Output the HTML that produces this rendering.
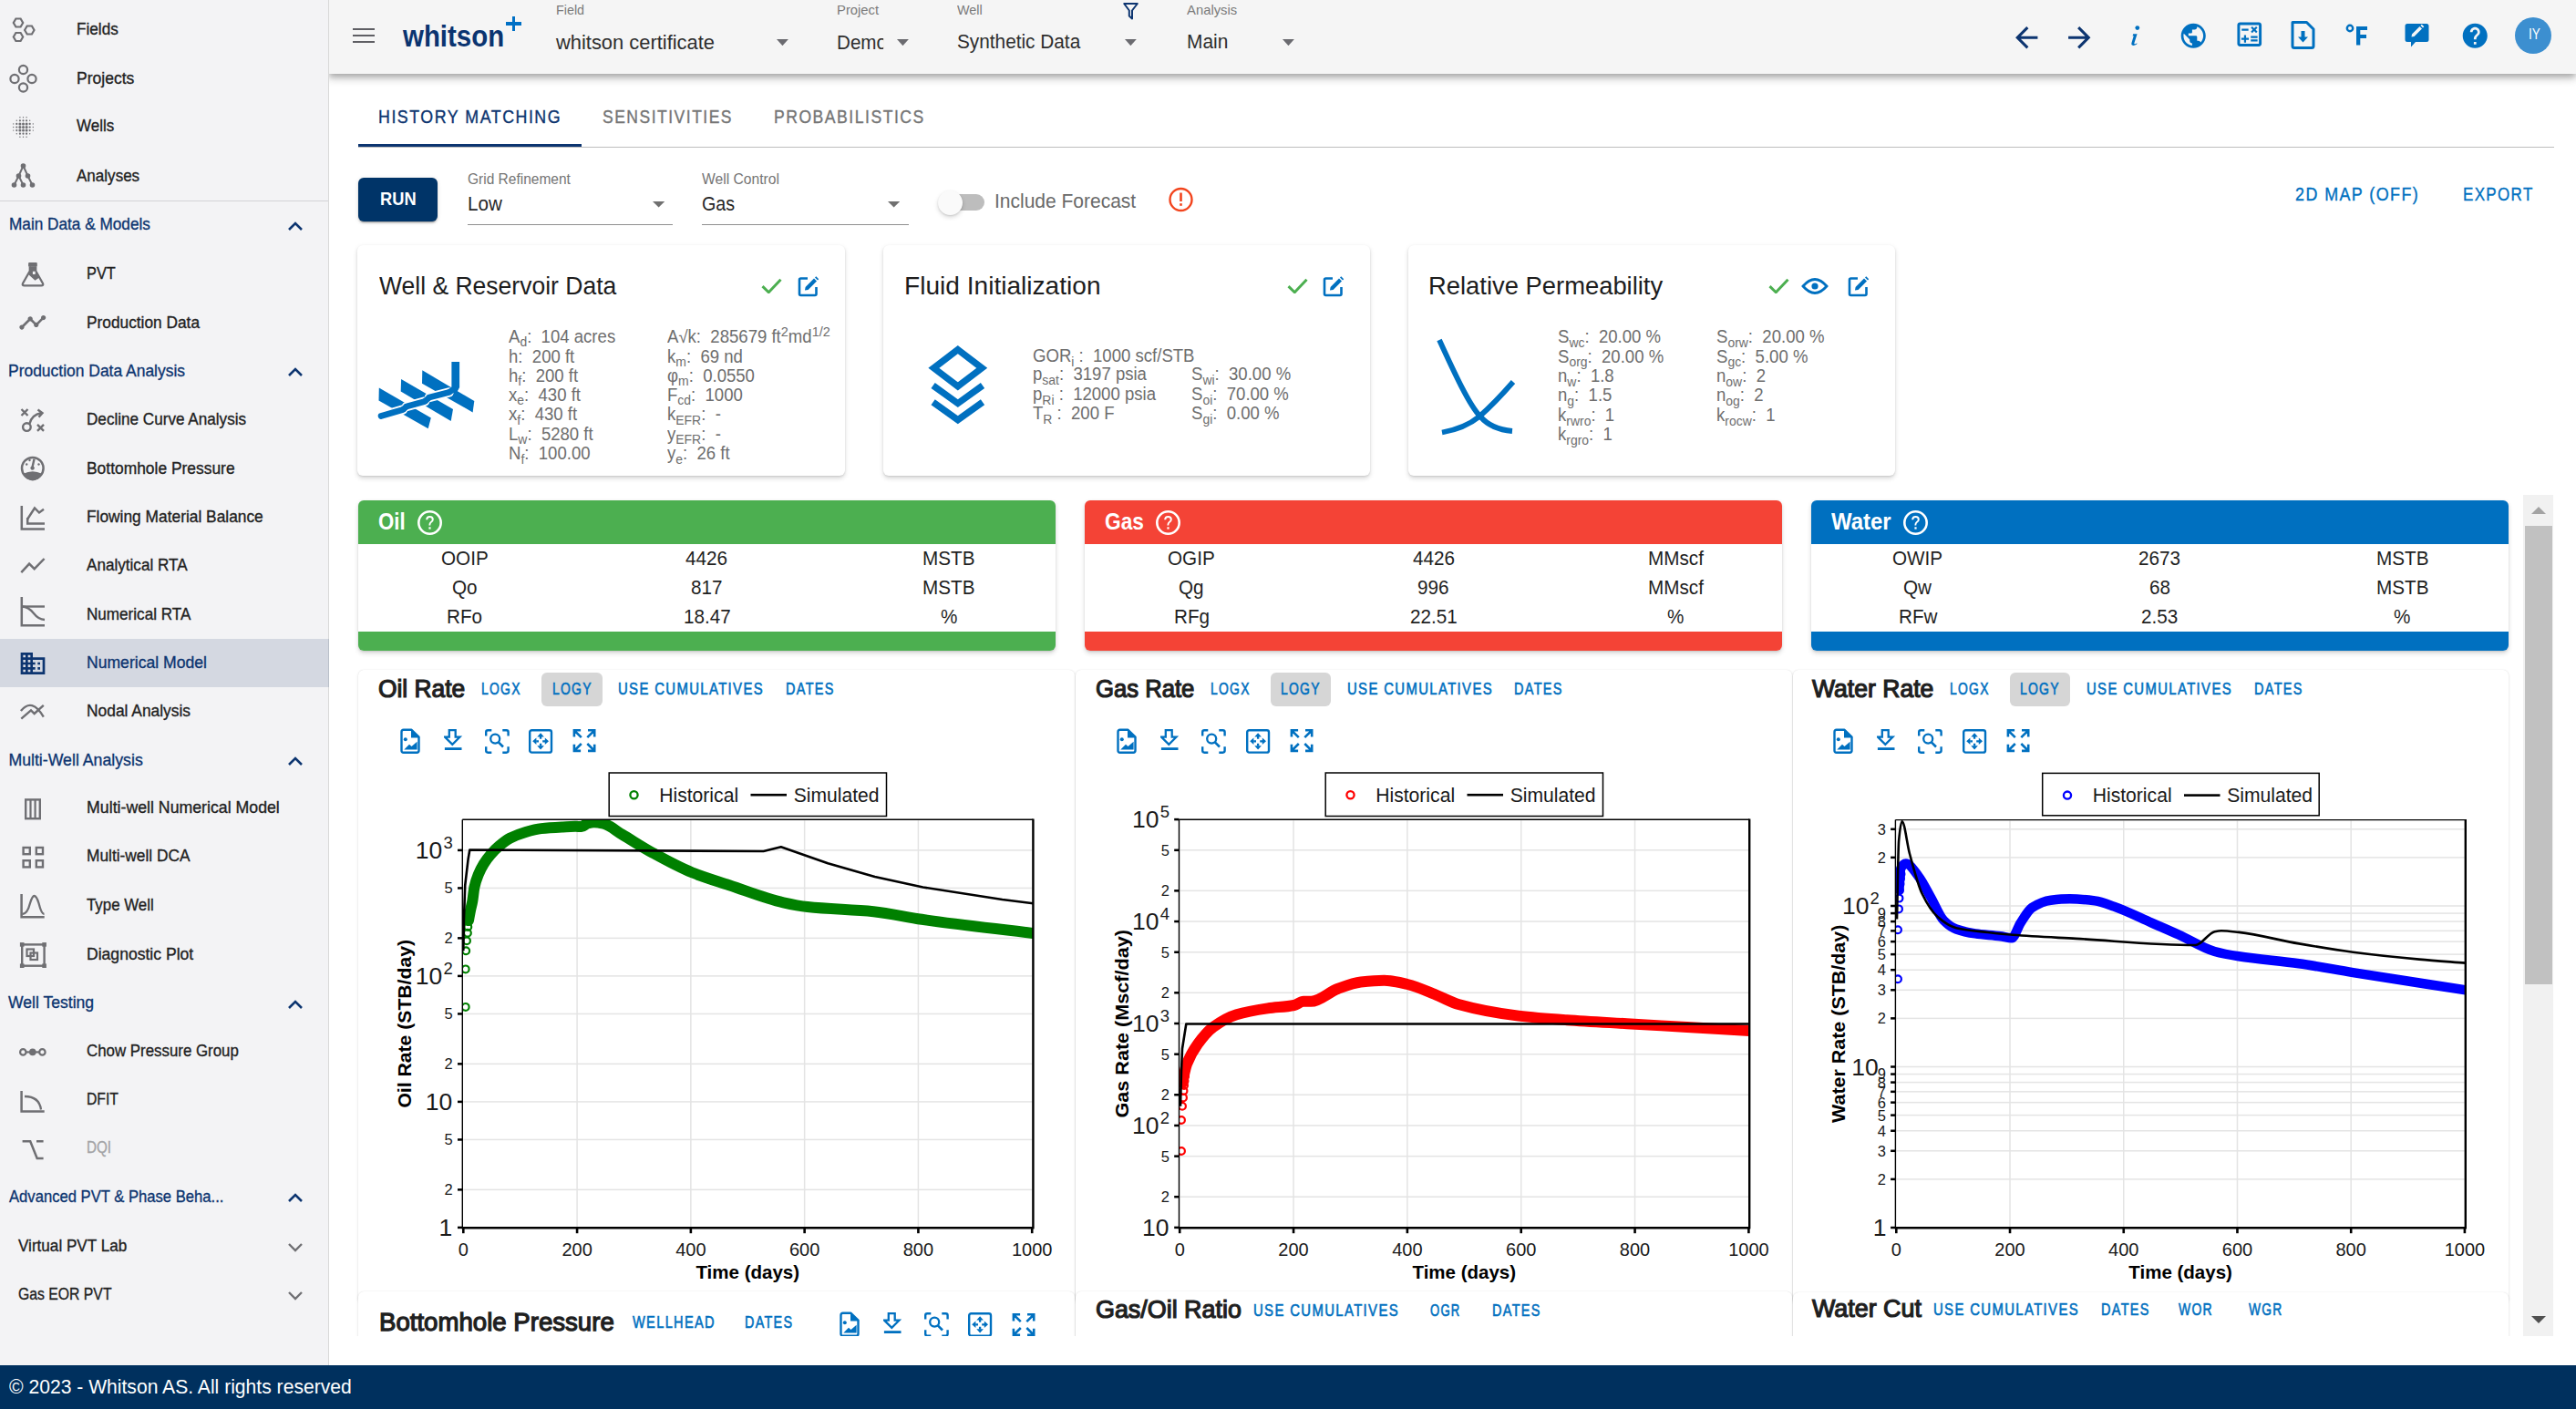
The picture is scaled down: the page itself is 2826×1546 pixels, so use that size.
<!DOCTYPE html>
<html><head><meta charset="utf-8"><title>whitson+</title>
<style>
html,body{margin:0;padding:0;}
body{width:2826px;height:1546px;overflow:hidden;position:relative;background:#ffffff;font-family:"Liberation Sans",sans-serif;}
.a{position:absolute;display:block;}
.t{position:absolute;white-space:nowrap;}
</style></head><body>
<div class="a" style="left:0;top:0;width:361px;height:1498px;z-index:3;overflow:hidden;">
<div class="a" style="left:0.00px;top:0.00px;width:360.00px;height:1498.00px;background:#f3f3f5;"></div>
<div class="a" style="left:359.50px;top:0.00px;width:1.50px;height:1498.00px;background:#d9d9d9;"></div>
<div class="a" style="left:0.00px;top:219.50px;width:359.50px;height:1.50px;background:#d3d3d6;"></div>
<div class="a" style="left:0.00px;top:701.10px;width:359.50px;height:52.70px;background:#d4d8e1;"></div>
<div class="a" style="left:359.50px;top:701.10px;width:1.50px;height:52.70px;background:#bac0c9;"></div>
<div class="t" style="left:84.30px;top:24.39px;font-size:17.73px;line-height:17.73px;color:#212121;-webkit-text-stroke:0.32px #212121;transform:scaleX(0.9682);transform-origin:0 0;">Fields</div>
<div class="t" style="left:84.30px;top:77.59px;font-size:17.73px;line-height:17.73px;color:#212121;-webkit-text-stroke:0.32px #212121;transform:scaleX(0.9882);transform-origin:0 0;">Projects</div>
<div class="t" style="left:84.30px;top:130.49px;font-size:17.73px;line-height:17.73px;color:#212121;-webkit-text-stroke:0.32px #212121;transform:scaleX(0.9576);transform-origin:0 0;">Wells</div>
<div class="t" style="left:84.30px;top:184.59px;font-size:17.73px;line-height:17.73px;color:#212121;-webkit-text-stroke:0.32px #212121;transform:scaleX(0.9617);transform-origin:0 0;">Analyses</div>
<div class="t" style="left:9.60px;top:238.09px;font-size:17.73px;line-height:17.73px;color:#0d3570;-webkit-text-stroke:0.32px #0d3570;transform:scaleX(0.9708);transform-origin:0 0;">Main Data &amp; Models</div>
<div class="t" style="left:95.10px;top:291.89px;font-size:17.73px;line-height:17.73px;color:#212121;-webkit-text-stroke:0.32px #212121;transform:scaleX(0.9221);transform-origin:0 0;">PVT</div>
<div class="t" style="left:95.10px;top:345.89px;font-size:17.73px;line-height:17.73px;color:#212121;-webkit-text-stroke:0.32px #212121;transform:scaleX(0.9759);transform-origin:0 0;">Production Data</div>
<div class="t" style="left:9.40px;top:398.59px;font-size:17.73px;line-height:17.73px;color:#0d3570;-webkit-text-stroke:0.32px #0d3570;transform:scaleX(0.9851);transform-origin:0 0;">Production Data Analysis</div>
<div class="t" style="left:95.10px;top:451.99px;font-size:17.73px;line-height:17.73px;color:#212121;-webkit-text-stroke:0.32px #212121;transform:scaleX(0.9661);transform-origin:0 0;">Decline Curve Analysis</div>
<div class="t" style="left:95.10px;top:505.99px;font-size:17.73px;line-height:17.73px;color:#212121;-webkit-text-stroke:0.32px #212121;transform:scaleX(0.9826);transform-origin:0 0;">Bottomhole Pressure</div>
<div class="t" style="left:95.10px;top:559.09px;font-size:17.73px;line-height:17.73px;color:#212121;-webkit-text-stroke:0.32px #212121;transform:scaleX(0.9787);transform-origin:0 0;">Flowing Material Balance</div>
<div class="t" style="left:95.10px;top:611.89px;font-size:17.73px;line-height:17.73px;color:#212121;-webkit-text-stroke:0.32px #212121;transform:scaleX(0.9655);transform-origin:0 0;">Analytical RTA</div>
<div class="t" style="left:95.10px;top:665.79px;font-size:17.73px;line-height:17.73px;color:#212121;-webkit-text-stroke:0.32px #212121;transform:scaleX(0.9648);transform-origin:0 0;">Numerical RTA</div>
<div class="t" style="left:95.10px;top:718.89px;font-size:17.73px;line-height:17.73px;color:#0d3570;-webkit-text-stroke:0.32px #0d3570;transform:scaleX(0.9922);transform-origin:0 0;">Numerical Model</div>
<div class="t" style="left:95.10px;top:771.99px;font-size:17.73px;line-height:17.73px;color:#212121;-webkit-text-stroke:0.32px #212121;transform:scaleX(0.9810);transform-origin:0 0;">Nodal Analysis</div>
<div class="t" style="left:9.40px;top:825.59px;font-size:17.73px;line-height:17.73px;color:#0d3570;-webkit-text-stroke:0.32px #0d3570;">Multi-Well Analysis</div>
<div class="t" style="left:95.10px;top:878.39px;font-size:17.73px;line-height:17.73px;color:#212121;-webkit-text-stroke:0.32px #212121;">Multi-well Numerical Model</div>
<div class="t" style="left:95.10px;top:931.49px;font-size:17.73px;line-height:17.73px;color:#212121;-webkit-text-stroke:0.32px #212121;transform:scaleX(0.9771);transform-origin:0 0;">Multi-well DCA</div>
<div class="t" style="left:95.10px;top:985.49px;font-size:17.73px;line-height:17.73px;color:#212121;-webkit-text-stroke:0.32px #212121;transform:scaleX(0.9519);transform-origin:0 0;">Type Well</div>
<div class="t" style="left:95.10px;top:1038.59px;font-size:17.73px;line-height:17.73px;color:#212121;-webkit-text-stroke:0.32px #212121;transform:scaleX(0.9917);transform-origin:0 0;">Diagnostic Plot</div>
<div class="t" style="left:9.40px;top:1091.89px;font-size:17.73px;line-height:17.73px;color:#0d3570;-webkit-text-stroke:0.32px #0d3570;transform:scaleX(0.9921);transform-origin:0 0;">Well Testing</div>
<div class="t" style="left:95.10px;top:1145.29px;font-size:17.73px;line-height:17.73px;color:#212121;-webkit-text-stroke:0.32px #212121;transform:scaleX(0.9519);transform-origin:0 0;">Chow Pressure Group</div>
<div class="t" style="left:95.10px;top:1197.89px;font-size:17.73px;line-height:17.73px;color:#212121;-webkit-text-stroke:0.32px #212121;transform:scaleX(0.8884);transform-origin:0 0;">DFIT</div>
<div class="t" style="left:95.10px;top:1251.49px;font-size:17.73px;line-height:17.73px;color:#a3a3a6;-webkit-text-stroke:0.32px #a3a3a6;transform:scaleX(0.8596);transform-origin:0 0;">DQI</div>
<div class="t" style="left:9.80px;top:1305.49px;font-size:17.73px;line-height:17.73px;color:#0d3570;-webkit-text-stroke:0.32px #0d3570;transform:scaleX(0.9385);transform-origin:0 0;">Advanced PVT &amp; Phase Beha...</div>
<div class="t" style="left:20.40px;top:1358.59px;font-size:17.73px;line-height:17.73px;color:#212121;-webkit-text-stroke:0.32px #212121;transform:scaleX(0.9656);transform-origin:0 0;">Virtual PVT Lab</div>
<div class="t" style="left:20.40px;top:1411.69px;font-size:17.73px;line-height:17.73px;color:#212121;-webkit-text-stroke:0.32px #212121;transform:scaleX(0.8899);transform-origin:0 0;">Gas EOR PVT</div>
<svg class="a" style="left:314.00px;top:239.50px;" width="20.00" height="16.00" viewBox="0 0 20 16"><path d="M3 12 L10 5 L17 12" fill="none" stroke="#0d3570" stroke-width="2.6"/></svg>
<svg class="a" style="left:314.00px;top:400.00px;" width="20.00" height="16.00" viewBox="0 0 20 16"><path d="M3 12 L10 5 L17 12" fill="none" stroke="#0d3570" stroke-width="2.6"/></svg>
<svg class="a" style="left:314.00px;top:827.00px;" width="20.00" height="16.00" viewBox="0 0 20 16"><path d="M3 12 L10 5 L17 12" fill="none" stroke="#0d3570" stroke-width="2.6"/></svg>
<svg class="a" style="left:314.00px;top:1093.50px;" width="20.00" height="16.00" viewBox="0 0 20 16"><path d="M3 12 L10 5 L17 12" fill="none" stroke="#0d3570" stroke-width="2.6"/></svg>
<svg class="a" style="left:314.00px;top:1306.00px;" width="20.00" height="16.00" viewBox="0 0 20 16"><path d="M3 12 L10 5 L17 12" fill="none" stroke="#0d3570" stroke-width="2.6"/></svg>
<svg class="a" style="left:314.00px;top:1360.00px;" width="20.00" height="16.00" viewBox="0 0 20 16"><path d="M3 5 L10 12 L17 5" fill="none" stroke="#6f6f73" stroke-width="2.4"/></svg>
<svg class="a" style="left:314.00px;top:1413.00px;" width="20.00" height="16.00" viewBox="0 0 20 16"><path d="M3 5 L10 12 L17 5" fill="none" stroke="#6f6f73" stroke-width="2.4"/></svg>
<svg class="a" style="left:0.00px;top:0.00px;" width="60.00" height="60.00" viewBox="0 0 60 60"><polygon points="25.20,25.00 22.60,29.50 17.40,29.50 14.80,25.00 17.40,20.50 22.60,20.50" fill="none" stroke="#6f6f73" stroke-width="2.2"/><polygon points="37.50,33.00 34.90,37.50 29.70,37.50 27.10,33.00 29.70,28.50 34.90,28.50" fill="none" stroke="#6f6f73" stroke-width="2.2"/><polygon points="25.20,40.50 22.60,45.00 17.40,45.00 14.80,40.50 17.40,36.00 22.60,36.00" fill="none" stroke="#6f6f73" stroke-width="2.2"/></svg>
<svg class="a" style="left:0.00px;top:60.00px;" width="60.00" height="60.00" viewBox="0 0 60 60"><circle cx="25.5" cy="16.5" r="4.6" fill="none" stroke="#6f6f73" stroke-width="2.2"/><circle cx="16" cy="26.5" r="4.6" fill="none" stroke="#6f6f73" stroke-width="2.2"/><circle cx="35" cy="26.5" r="4.6" fill="none" stroke="#6f6f73" stroke-width="2.2"/><circle cx="25.5" cy="36" r="4.6" fill="none" stroke="#6f6f73" stroke-width="2.2"/></svg>
<svg class="a" style="left:0.00px;top:120.00px;" width="60.00" height="40.00" viewBox="0 0 60 40"><circle cx="14.70" cy="15.90" r="0.7" fill="#6f6f73"/><circle cx="14.70" cy="19.50" r="0.7" fill="#6f6f73"/><circle cx="14.70" cy="23.10" r="0.7" fill="#6f6f73"/><circle cx="18.30" cy="12.30" r="0.7" fill="#6f6f73"/><circle cx="18.30" cy="15.90" r="1.1" fill="#6f6f73"/><circle cx="18.30" cy="19.50" r="1.1" fill="#6f6f73"/><circle cx="18.30" cy="23.10" r="1.1" fill="#6f6f73"/><circle cx="18.30" cy="26.70" r="0.7" fill="#6f6f73"/><circle cx="21.90" cy="8.70" r="0.7" fill="#6f6f73"/><circle cx="21.90" cy="12.30" r="1.1" fill="#6f6f73"/><circle cx="21.90" cy="15.90" r="1.5" fill="#6f6f73"/><circle cx="21.90" cy="19.50" r="1.5" fill="#6f6f73"/><circle cx="21.90" cy="23.10" r="1.5" fill="#6f6f73"/><circle cx="21.90" cy="26.70" r="1.1" fill="#6f6f73"/><circle cx="21.90" cy="30.30" r="0.7" fill="#6f6f73"/><circle cx="25.50" cy="8.70" r="0.7" fill="#6f6f73"/><circle cx="25.50" cy="12.30" r="1.1" fill="#6f6f73"/><circle cx="25.50" cy="15.90" r="1.5" fill="#6f6f73"/><circle cx="25.50" cy="19.50" r="1.5" fill="#6f6f73"/><circle cx="25.50" cy="23.10" r="1.5" fill="#6f6f73"/><circle cx="25.50" cy="26.70" r="1.1" fill="#6f6f73"/><circle cx="25.50" cy="30.30" r="0.7" fill="#6f6f73"/><circle cx="29.10" cy="8.70" r="0.7" fill="#6f6f73"/><circle cx="29.10" cy="12.30" r="1.1" fill="#6f6f73"/><circle cx="29.10" cy="15.90" r="1.5" fill="#6f6f73"/><circle cx="29.10" cy="19.50" r="1.5" fill="#6f6f73"/><circle cx="29.10" cy="23.10" r="1.5" fill="#6f6f73"/><circle cx="29.10" cy="26.70" r="1.1" fill="#6f6f73"/><circle cx="29.10" cy="30.30" r="0.7" fill="#6f6f73"/><circle cx="32.70" cy="12.30" r="0.7" fill="#6f6f73"/><circle cx="32.70" cy="15.90" r="1.1" fill="#6f6f73"/><circle cx="32.70" cy="19.50" r="1.1" fill="#6f6f73"/><circle cx="32.70" cy="23.10" r="1.1" fill="#6f6f73"/><circle cx="32.70" cy="26.70" r="0.7" fill="#6f6f73"/><circle cx="36.30" cy="15.90" r="0.7" fill="#6f6f73"/><circle cx="36.30" cy="19.50" r="0.7" fill="#6f6f73"/><circle cx="36.30" cy="23.10" r="0.7" fill="#6f6f73"/></svg>
<svg class="a" style="left:0.00px;top:170.00px;" width="60.00" height="40.00" viewBox="0 0 60 40"><path d="M25.5 12 L20.5 23 L15.5 33 M20.5 23 L25.5 33 M25.5 12 L30.5 23 L35.5 33" fill="none" stroke="#6f6f73" stroke-width="2"/><circle cx="25.5" cy="12" r="2.8" fill="#6f6f73"/><circle cx="20.5" cy="23" r="2.8" fill="#6f6f73"/><circle cx="30.5" cy="23" r="2.8" fill="#6f6f73"/><circle cx="15.5" cy="33" r="2.8" fill="#6f6f73"/><circle cx="25.5" cy="33" r="2.8" fill="#6f6f73"/><circle cx="35.5" cy="33" r="2.8" fill="#6f6f73"/></svg>
<svg class="a" style="left:20.00px;top:284.00px;" width="32.00" height="34.00" viewBox="0 0 32 34"><rect x="11.1" y="3.9" width="9.7" height="4.8" rx="1.2" fill="#6f6f73"/><path d="M12.8 8.5 V13.2 L5 27 Q4 29.4 6.8 29.4 H25.2 Q28 29.4 27 27 L19.2 13.2 V8.5" fill="none" stroke="#6f6f73" stroke-width="2.3" stroke-linejoin="round"/><path d="M12.8 8.5 H19.2 V13.2 L23.5 20.2 L18.5 23.8 L10.8 16.8 L12.8 13.2 Z" fill="#6f6f73"/><rect x="15.9" y="13.8" width="2.8" height="3.2" fill="#f3f3f5"/></svg>
<svg class="a" style="left:20.20px;top:338.20px;" width="31.60" height="31.60" viewBox="0 0 24 24"><path d="M23 8c0 1.1-.9 2-2 2-.18 0-.35-.02-.51-.07l-3.56 3.55c.05.16.07.34.07.52 0 1.1-.9 2-2 2s-2-.9-2-2c0-.18.02-.36.07-.52l-2.55-2.550c-.16.05-.34.07-.52.07s-.36-.02-.52-.07l-4.55 4.56c.05.16.07.33.07.51 0 1.1-.9 2-2 2s-2-.9-2-2 .9-2 2-2c.18 0 .35.02.51.07l4.56-4.55C8.02 9.36 8 9.18 8 9c0-1.1.9-2 2-2s2 .9 2 2c0 .18-.02.36-.07.52l2.55 2.55c.16-.05.34-.07.52-.07s.36.02.52.07l3.55-3.56C19.02 8.35 19 8.18 19 8c0-1.1.9-2 2-2s2 .9 2 2z" fill="#6f6f73"/></svg>
<svg class="a" style="left:0.00px;top:440.00px;" width="60.00" height="40.00" viewBox="0 0 60 40"><path d="M23.5 9 l7 7 M30.5 9 l-7 7 M41 25.8 l7 7 M48 25.8 l-7 7" stroke="#6f6f73" stroke-width="2.4"/><circle cx="29.4" cy="28.6" r="4.3" fill="none" stroke="#6f6f73" stroke-width="2.4"/><path d="M32.4 25 Q35 15 45 13.3" fill="none" stroke="#6f6f73" stroke-width="2.4"/><path d="M41.5 9.5 L46.5 13.2 L42.5 17.6" fill="none" stroke="#6f6f73" stroke-width="2.4"/></svg>
<svg class="a" style="left:0.00px;top:494.00px;" width="60.00" height="40.00" viewBox="0 0 60 40"><circle cx="35.8" cy="19.8" r="11.8" fill="none" stroke="#6f6f73" stroke-width="2.5"/><path d="M25.6 25.8 Q35.8 20.8 46 25.8 A10.6 10.6 0 0 1 25.6 25.8 Z" fill="#6f6f73"/><path d="M35.3 19.5 L37.5 9.8" stroke="#6f6f73" stroke-width="2.4"/><circle cx="35.6" cy="19.6" r="2.2" fill="#6f6f73"/><circle cx="29.2" cy="15.5" r="1.2" fill="#6f6f73"/><circle cx="42.5" cy="15.5" r="1.2" fill="#6f6f73"/><circle cx="32.5" cy="11" r="1.2" fill="#6f6f73"/></svg>
<svg class="a" style="left:0.00px;top:550.00px;" width="60.00" height="40.00" viewBox="0 0 60 40"><path d="M23.8 5 V30.5 H49" fill="none" stroke="#6f6f73" stroke-width="2.5"/><path d="M30.2 18 V24.5 H49" fill="none" stroke="#6f6f73" stroke-width="2.5"/><path d="M30.2 19.5 L38 7.5 L43 12.5 L48 8.8" fill="none" stroke="#6f6f73" stroke-width="2.4"/></svg>
<svg class="a" style="left:0.00px;top:600.00px;" width="60.00" height="40.00" viewBox="0 0 60 40"><path d="M23.3 28.2 L32.1 18.6 L37.7 24.2 L48.6 13" fill="none" stroke="#6f6f73" stroke-width="2.5"/></svg>
<svg class="a" style="left:0.00px;top:650.00px;" width="60.00" height="40.00" viewBox="0 0 60 40"><path d="M23.8 5 V36.3 H49" fill="none" stroke="#6f6f73" stroke-width="2.5"/><path d="M23.8 15.5 H49" fill="none" stroke="#6f6f73" stroke-width="2.4"/><path d="M24 15.5 Q31 15.5 37 23 Q42 29.5 49 30" fill="none" stroke="#6f6f73" stroke-width="2.4"/></svg>
<svg class="a" style="left:19.80px;top:711.70px;" width="32.00" height="32.00" viewBox="0 0 24 24"><path d="M12 7V3H2v18h20V7H12zM6 19H4v-2h2v2zm0-4H4v-2h2v2zm0-4H4V9h2v2zm0-4H4V5h2v2zm4 12H8v-2h2v2zm0-4H8v-2h2v2zm0-4H8V9h2v2zm0-4H8V5h2v2zm10 12h-8v-2h2v-2h-2v-2h2v-2h-2V9h8v10zm-2-8h-2v2h2v-2zm0 4h-2v2h2v-2z" fill="#0d3570"/></svg>
<svg class="a" style="left:0.00px;top:760.00px;" width="60.00" height="40.00" viewBox="0 0 60 40"><path d="M22.9 20 Q35 5 47.8 26.7" fill="none" stroke="#6f6f73" stroke-width="2.4"/><path d="M23.3 28.6 L34 19.3 L37.7 23 L47.8 13.8" fill="none" stroke="#6f6f73" stroke-width="2.4"/></svg>
<svg class="a" style="left:0.00px;top:870.00px;" width="60.00" height="40.00" viewBox="0 0 60 40"><rect x="28.2" y="7.4" width="15.6" height="20.8" fill="none" stroke="#6f6f73" stroke-width="2.4"/><path d="M33.5 7.4 V28.2 M38.6 7.4 V28.2" stroke="#6f6f73" stroke-width="2.2"/></svg>
<svg class="a" style="left:0.00px;top:925.00px;" width="60.00" height="40.00" viewBox="0 0 60 40"><rect x="25.6" y="5.0" width="7.2" height="7.2" fill="none" stroke="#6f6f73" stroke-width="2.4"/><rect x="25.6" y="19.2" width="7.2" height="7.2" fill="none" stroke="#6f6f73" stroke-width="2.4"/><rect x="39.8" y="5.0" width="7.2" height="7.2" fill="none" stroke="#6f6f73" stroke-width="2.4"/><rect x="39.8" y="19.2" width="7.2" height="7.2" fill="none" stroke="#6f6f73" stroke-width="2.4"/></svg>
<svg class="a" style="left:0.00px;top:975.00px;" width="60.00" height="40.00" viewBox="0 0 60 40"><path d="M23.6 6 V31.2 H48.7" fill="none" stroke="#6f6f73" stroke-width="2.5"/><path d="M24.5 28 Q30 28 33 16 Q35.5 8 37.5 8 Q40 8 42.5 16 Q45.5 28 48.5 28" fill="none" stroke="#6f6f73" stroke-width="2.3"/></svg>
<svg class="a" style="left:0.00px;top:1030.00px;" width="60.00" height="40.00" viewBox="0 0 60 40"><rect x="24.2" y="6.4" width="24.4" height="23.3" fill="none" stroke="#6f6f73" stroke-width="2.4"/><rect x="21.9" y="4.1" width="4.6" height="4.6" fill="#6f6f73"/><rect x="21.9" y="27.4" width="4.6" height="4.6" fill="#6f6f73"/><rect x="46.3" y="4.1" width="4.6" height="4.6" fill="#6f6f73"/><rect x="46.3" y="27.4" width="4.6" height="4.6" fill="#6f6f73"/><rect x="29.5" y="11.5" width="7.5" height="7.5" fill="none" stroke="#6f6f73" stroke-width="2.2"/><rect x="33.5" y="15.5" width="7.5" height="7.5" fill="none" stroke="#6f6f73" stroke-width="2.2"/></svg>
<svg class="a" style="left:0.00px;top:1140.00px;" width="60.00" height="30.00" viewBox="0 0 60 30"><circle cx="25.3" cy="14.4" r="3.2" fill="none" stroke="#6f6f73" stroke-width="2.2"/><circle cx="35.8" cy="14.4" r="3.8" fill="#6f6f73"/><circle cx="46.4" cy="14.4" r="3.2" fill="none" stroke="#6f6f73" stroke-width="2.2"/><path d="M28.5 14.4 H43.2" stroke="#6f6f73" stroke-width="2.2"/></svg>
<svg class="a" style="left:0.00px;top:1190.00px;" width="60.00" height="40.00" viewBox="0 0 60 40"><path d="M23.6 7 V29.4 H48.7" fill="none" stroke="#6f6f73" stroke-width="2.5"/><path d="M27 13 Q43 13 45 27.5" fill="none" stroke="#6f6f73" stroke-width="2.3"/></svg>
<svg class="a" style="left:0.00px;top:1240.00px;" width="60.00" height="40.00" viewBox="0 0 60 40"><path d="M24.6 12.3 H33.2 L40.7 31 H47.6 M40 12.3 H47.6" fill="none" stroke="#6f6f73" stroke-width="2.5"/></svg>
</div>
<div class="a" style="left:360.00px;top:0.00px;width:2466.00px;height:81.00px;background:#f5f5f5;box-shadow:0 3px 6px -1.5px rgba(0,0,0,0.2),0 6px 7.5px 0 rgba(0,0,0,0.14),0 1.5px 15px 0 rgba(0,0,0,0.12);z-index:2;"></div>
<div class="a" style="left:386.80px;top:31.00px;width:24.00px;height:2.30px;background:#5f5f64;z-index:4;"></div>
<div class="a" style="left:386.80px;top:38.00px;width:24.00px;height:2.30px;background:#5f5f64;z-index:4;"></div>
<div class="a" style="left:386.80px;top:45.00px;width:24.00px;height:2.30px;background:#5f5f64;z-index:4;"></div>
<div class="t" style="left:441.80px;top:24.49px;font-size:32.85px;line-height:32.85px;color:#0b3470;font-weight:700;transform:scaleX(0.8962);transform-origin:0 0;z-index:4;">whitson</div>
<div class="a" style="left:561.50px;top:17.60px;width:3.50px;height:16.40px;background:#0070c5;z-index:4;"></div>
<div class="a" style="left:555.00px;top:24.00px;width:16.50px;height:3.60px;background:#0070c5;z-index:4;"></div>
<div class="t" style="left:609.60px;top:2.95px;font-size:15.41px;line-height:15.41px;color:#7b7b7b;transform:scaleX(0.9313);transform-origin:0 0;z-index:4;">Field</div>
<div class="t" style="left:609.60px;top:35.59px;font-size:22.09px;line-height:22.09px;color:#2e2e2e;transform:scaleX(0.9915);transform-origin:0 0;z-index:4;">whitson certificate</div>
<div class="t" style="left:918.00px;top:2.95px;font-size:15.41px;line-height:15.41px;color:#7b7b7b;transform:scaleX(0.9614);transform-origin:0 0;z-index:4;">Project</div>
<div class="t" style="left:918.00px;top:35.59px;font-size:22.09px;line-height:22.09px;color:#2e2e2e;transform:scaleX(0.9332);transform-origin:0 0;z-index:4;clip-path:inset(0 7% 0 0);">Demo</div>
<div class="t" style="left:1050.00px;top:2.95px;font-size:15.41px;line-height:15.41px;color:#7b7b7b;transform:scaleX(0.9333);transform-origin:0 0;z-index:4;">Well</div>
<div class="t" style="left:1050.00px;top:35.39px;font-size:22.09px;line-height:22.09px;color:#2e2e2e;transform:scaleX(0.9416);transform-origin:0 0;z-index:4;">Synthetic Data</div>
<div class="t" style="left:1302.30px;top:2.95px;font-size:15.41px;line-height:15.41px;color:#7b7b7b;transform:scaleX(0.9622);transform-origin:0 0;z-index:4;">Analysis</div>
<div class="t" style="left:1302.30px;top:35.39px;font-size:22.09px;line-height:22.09px;color:#2e2e2e;transform:scaleX(0.9460);transform-origin:0 0;z-index:4;">Main</div>
<svg class="a" style="left:851.90px;top:43.00px;z-index:4;" width="12.90" height="7.20" viewBox="0 0 12.899999999999977 7.2"><path d="M0 0 L12.90 0 L6.45 7.2 Z" fill="#6b6b70"/></svg>
<svg class="a" style="left:984.30px;top:43.00px;z-index:4;" width="12.90" height="7.20" viewBox="0 0 12.900000000000091 7.2"><path d="M0 0 L12.90 0 L6.45 7.2 Z" fill="#6b6b70"/></svg>
<svg class="a" style="left:1234.00px;top:43.00px;z-index:4;" width="12.80" height="7.20" viewBox="0 0 12.799999999999955 7.2"><path d="M0 0 L12.80 0 L6.40 7.2 Z" fill="#6b6b70"/></svg>
<svg class="a" style="left:1407.30px;top:43.00px;z-index:4;" width="12.90" height="7.20" viewBox="0 0 12.900000000000091 7.2"><path d="M0 0 L12.90 0 L6.45 7.2 Z" fill="#6b6b70"/></svg>
<svg class="a" style="left:1230.00px;top:1.00px;z-index:4;" width="21.00" height="22.00" viewBox="0 0 21 22"><path d="M3.2 3 H17.8 L12 10.5 V19.5 L8.8 16.6 V10.5 Z" fill="none" stroke="#0d3570" stroke-width="2" stroke-linejoin="round"/></svg>
<svg class="a" style="left:2205.05px;top:22.65px;z-index:4;" width="36.50" height="36.50" viewBox="0 0 24 24"><path d="M20 11H7.83l5.59-5.59L12 4l-8 8 8 8 1.41-1.41L7.83 13H20v-2z" fill="#0d3570"/></svg>
<svg class="a" style="left:2262.65px;top:22.65px;z-index:4;" width="36.50" height="36.50" viewBox="0 0 24 24"><path d="M12 4l-1.41 1.41L16.17 11H4v2h12.17l-5.58 5.59L12 20l8-8z" fill="#0d3570"/></svg>
<svg class="a" style="left:2334.00px;top:26.00px;z-index:4;" width="16.00" height="26.00" viewBox="0 0 16 26"><circle cx="10.8" cy="4.6" r="2.4" fill="#0070c0"/><path d="M6.2 11.2 H10.6 L7.4 21.2 Q7 22.8 8.6 22.2 L10.5 21.3 L10.2 22.6 Q7.5 24.2 5.6 23.8 Q3.8 23.3 4.4 21.2 L6.8 13.2 L5.6 13.4 Z" fill="#0070c0"/></svg>
<svg class="a" style="left:2390.25px;top:22.55px;z-index:4;" width="32.50" height="32.50" viewBox="0 0 24 24"><path d="M12 2C6.48 2 2 6.48 2 12s4.48 10 10 10 10-4.48 10-10S17.52 2 12 2zm-1 17.93c-3.95-.49-7-3.85-7-7.930 0-.62.08-1.21.21-1.79L9 15v1c0 1.1.9 2 2 2v1.93zm6.9-2.54c-.26-.81-1-1.39-1.9-1.39h-1v-3c0-.55-.45-1-1-1H8v-2h2c.55 0 1-.45 1-1V7h2c1.1 0 2-.9 2-2v-.41c2.930 1.19 5 4.06 5 7.41 0 2.08-.8 3.97-2.1 5.39z" fill="#0070c0"/></svg>
<svg class="a" style="left:2449.75px;top:20.25px;z-index:4;" width="35.50" height="35.50" viewBox="0 0 24 24"><path d="M19 3H5c-1.1 0-2 .9-2 2v14c0 1.1.9 2 2 2h14c1.1 0 2-.9 2-2V5c0-1.1-.9-2-2-2zm0 16H5V5h14v14zM6.25 7.72h5v1.5h-5zM13 15.75h5v1.5h-5zM13 13.25h5v1.5h-5zM8 18h1.5v-2h2v-1.5h-2v-2H8v2H6v1.5h2zM14.09 10.95l1.41-1.41 1.41 1.41 1.06-1.06-1.41-1.42 1.41-1.41L16.91 6 15.5 7.41 14.09 6l-1.06 1.06 1.41 1.41-1.410 1.42z" fill="#0070c0"/></svg>
<svg class="a" style="left:2511.00px;top:21.00px;z-index:4;" width="31.00" height="34.00" viewBox="0 0 31 34"><path d="M4 3.5 H19.5 L27 11 V29.5 Q27 31.5 25 31.5 H6 Q4 31.5 4 29.5 Z" fill="none" stroke="#0070c0" stroke-width="3" stroke-linejoin="round"/><path d="M13.5 13 H17.5 V19.5 H21 L15.5 25.5 L10 19.5 H13.5 Z" fill="#0070c0"/></svg>
<svg class="a" style="left:2573.00px;top:25.00px;z-index:4;" width="28.00" height="27.00" viewBox="0 0 28 27"><circle cx="5" cy="6" r="3.2" fill="none" stroke="#0070c0" stroke-width="2.4"/><path d="M12 4 H24 V8 H16.3 V13 H23 V17 H16.3 V24.5 H12 Z" fill="#0070c0"/></svg>
<svg class="a" style="left:2636.00px;top:23.00px;z-index:4;" width="31.00" height="32.00" viewBox="0 0 31 32"><path d="M5 3 H26 Q28.5 3 28.5 5.5 V20.5 Q28.5 23 26 23 H14 L9 28.5 V23 H5 Q2.5 23 2.5 20.5 V5.5 Q2.5 3 5 3 Z" fill="#0070c0"/><path d="M9.5 17.5 L10 14.5 L18.5 6 L21 8.5 L12.5 17 Z M19.5 5 L20.8 3.7 L23.3 6.2 L22 7.5 Z" fill="#f5f5f5"/></svg>
<svg class="a" style="left:2698.95px;top:22.55px;z-index:4;" width="32.50" height="32.50" viewBox="0 0 24 24"><path d="M12 2C6.48 2 2 6.48 2 12s4.48 10 10 10 10-4.48 10-10S17.52 2 12 2zm1 17h-2v-2h2v2zm2.07-7.75l-.9.92C13.45 12.9 13 13.5 13 15h-2v-.5c0-1.1.45-2.1 1.17-2.83l1.24-1.26c.37-.36.59-.86.59-1.41 0-1.1-.9-2-2-2s-2 .9-2 2H8c0-2.21 1.79-4 4-4s4 1.79 4 4c0 .88-.36 1.68-.93 2.25z" fill="#0070c0"/></svg>
<div class="a" style="left:2759px;top:18.8px;width:40.2px;height:40px;border-radius:50%;background:#3c8fd0;z-index:4;"></div>
<div class="t" style="left:2774.10px;top:30.37px;font-size:16.57px;line-height:16.57px;color:#ffffff;transform:scaleX(0.8176);transform-origin:0 0;z-index:5;">IY</div>
<div class="t" style="left:415.10px;top:118.48px;font-size:20.93px;line-height:20.93px;color:#0d3570;-webkit-text-stroke:0.38px #0d3570;letter-spacing:1.80px;transform:scaleX(0.8504);transform-origin:0 0;">HISTORY MATCHING</div>
<div class="t" style="left:660.60px;top:118.48px;font-size:20.93px;line-height:20.93px;color:#757575;-webkit-text-stroke:0.38px #757575;letter-spacing:1.80px;transform:scaleX(0.8363);transform-origin:0 0;">SENSITIVITIES</div>
<div class="t" style="left:848.60px;top:118.48px;font-size:20.93px;line-height:20.93px;color:#757575;-webkit-text-stroke:0.38px #757575;letter-spacing:1.80px;transform:scaleX(0.8401);transform-origin:0 0;">PROBABILISTICS</div>
<div class="a" style="left:393.00px;top:160.80px;width:2408.50px;height:1.50px;background:#bdbdbd;"></div>
<div class="a" style="left:393.20px;top:158.00px;width:244.70px;height:3.00px;background:#0d3570;"></div>
<div class="a" style="left:393.2px;top:195px;width:86.6px;height:47.6px;border-radius:6px;background:#003468;box-shadow:0 3px 1px -2px rgba(0,0,0,0.2),0 2px 2px 0 rgba(0,0,0,0.14),0 1px 5px 0 rgba(0,0,0,0.12);"></div>
<div class="t" style="left:416.70px;top:207.62px;font-size:20.64px;line-height:20.64px;color:#ffffff;font-weight:700;transform:scaleX(0.8856);transform-origin:0 0;">RUN</div>
<div class="t" style="left:512.50px;top:187.56px;font-size:17.30px;line-height:17.30px;color:#757575;transform:scaleX(0.8973);transform-origin:0 0;">Grid Refinement</div>
<div class="t" style="left:512.50px;top:212.74px;font-size:21.80px;line-height:21.80px;color:#262626;transform:scaleX(0.9451);transform-origin:0 0;">Low</div>
<svg class="a" style="left:715.80px;top:221.20px;" width="13.20" height="6.60" viewBox="0 0 13.2 6.6"><path d="M0 0 L13.2 0 L6.6 6.6 Z" fill="#707070"/></svg>
<div class="a" style="left:512.50px;top:245.60px;width:225.20px;height:1.50px;background:#8f8f8f;"></div>
<div class="t" style="left:770.20px;top:187.56px;font-size:17.30px;line-height:17.30px;color:#757575;transform:scaleX(0.9054);transform-origin:0 0;">Well Control</div>
<div class="t" style="left:770.20px;top:212.74px;font-size:21.80px;line-height:21.80px;color:#262626;transform:scaleX(0.9028);transform-origin:0 0;">Gas</div>
<svg class="a" style="left:974.00px;top:221.20px;" width="13.20" height="6.60" viewBox="0 0 13.2 6.6"><path d="M0 0 L13.2 0 L6.6 6.6 Z" fill="#707070"/></svg>
<div class="a" style="left:770.20px;top:245.60px;width:226.80px;height:1.50px;background:#8f8f8f;"></div>
<div class="a" style="left:1031px;top:212.9px;width:49px;height:18.1px;border-radius:9px;background:#bdbdbd;"></div>
<div class="a" style="left:1029px;top:208.8px;width:27px;height:27px;border-radius:50%;background:#fafafa;box-shadow:0 2.5px 5px rgba(0,0,0,0.15),0 1px 2px rgba(0,0,0,0.10);"></div>
<div class="t" style="left:1091.40px;top:210.17px;font-size:22.24px;line-height:22.24px;color:#6a6a6a;transform:scaleX(0.9440);transform-origin:0 0;">Include Forecast</div>
<svg class="a" style="left:1280.00px;top:204.00px;" width="31.00" height="31.00" viewBox="0 0 31 31"><circle cx="15.5" cy="15" r="12" fill="none" stroke="#f2441d" stroke-width="2.4"/><rect x="14.2" y="7.5" width="2.6" height="9.5" fill="#f2441d"/><rect x="14.2" y="19.2" width="2.6" height="2.6" fill="#f2441d"/></svg>
<div class="t" style="left:2518.00px;top:203.02px;font-size:20.06px;line-height:20.06px;color:#0070c0;-webkit-text-stroke:0.36px #0070c0;letter-spacing:1.60px;transform:scaleX(0.8928);transform-origin:0 0;">2D MAP (OFF)</div>
<div class="t" style="left:2701.60px;top:203.02px;font-size:20.06px;line-height:20.06px;color:#0070c0;-webkit-text-stroke:0.36px #0070c0;letter-spacing:1.60px;transform:scaleX(0.8472);transform-origin:0 0;">EXPORT</div>
<div class="a" style="left:392.40px;top:269.00px;width:534.30px;height:253.00px;background:#fff;border-radius:6px;box-shadow:0 2.5px 5px rgba(0,0,0,0.15),0 1px 2px rgba(0,0,0,0.10);"></div>
<div class="a" style="left:969.10px;top:269.00px;width:533.70px;height:253.00px;background:#fff;border-radius:6px;box-shadow:0 2.5px 5px rgba(0,0,0,0.15),0 1px 2px rgba(0,0,0,0.10);"></div>
<div class="a" style="left:1544.80px;top:269.00px;width:534.10px;height:253.00px;background:#fff;border-radius:6px;box-shadow:0 2.5px 5px rgba(0,0,0,0.15),0 1px 2px rgba(0,0,0,0.10);"></div>
<div class="t" style="left:416.00px;top:298.98px;font-size:28.49px;line-height:28.49px;color:#1d1d1d;transform:scaleX(0.9306);transform-origin:0 0;">Well &amp; Reservoir Data</div>
<div class="t" style="left:992.20px;top:298.98px;font-size:28.49px;line-height:28.49px;color:#1d1d1d;transform:scaleX(0.9866);transform-origin:0 0;">Fluid Initialization</div>
<div class="t" style="left:1567.40px;top:298.98px;font-size:28.49px;line-height:28.49px;color:#1d1d1d;transform:scaleX(0.9612);transform-origin:0 0;">Relative Permeability</div>
<svg class="a" style="left:835.40px;top:304.60px;" width="23.00" height="17.50" viewBox="0 0 23 17.5"><path d="M1.5 9.10 L8.28 15.70 L21.50 1.8" fill="none" stroke="#4caf50" stroke-width="3"/></svg>
<svg class="a" style="left:874.00px;top:301.50px;" width="25.00" height="25.00" viewBox="0 0 25 25"><path d="M12 3.5 H4.5 Q3 3.5 3 5 V20.5 Q3 22 4.5 22 H20 Q21.5 22 21.5 20.5 V13" fill="none" stroke="#0070c0" stroke-width="2.6"/><path d="M9 16.5 L9.6 13 L19 3.6 L22 6.6 L12.6 16 Z" fill="#0070c0"/><path d="M20 2.6 L21.3 1.3 L24.2 4.2 L23 5.5 Z" fill="#0070c0"/></svg>
<svg class="a" style="left:1411.70px;top:304.60px;" width="23.00" height="17.50" viewBox="0 0 23 17.5"><path d="M1.5 9.10 L8.28 15.70 L21.50 1.8" fill="none" stroke="#4caf50" stroke-width="3"/></svg>
<svg class="a" style="left:1450.30px;top:301.50px;" width="25.00" height="25.00" viewBox="0 0 25 25"><path d="M12 3.5 H4.5 Q3 3.5 3 5 V20.5 Q3 22 4.5 22 H20 Q21.5 22 21.5 20.5 V13" fill="none" stroke="#0070c0" stroke-width="2.6"/><path d="M9 16.5 L9.6 13 L19 3.6 L22 6.6 L12.6 16 Z" fill="#0070c0"/><path d="M20 2.6 L21.3 1.3 L24.2 4.2 L23 5.5 Z" fill="#0070c0"/></svg>
<svg class="a" style="left:1939.80px;top:304.60px;" width="23.00" height="17.50" viewBox="0 0 23 17.5"><path d="M1.5 9.10 L8.28 15.70 L21.50 1.8" fill="none" stroke="#4caf50" stroke-width="3"/></svg>
<svg class="a" style="left:1975.80px;top:304.00px;" width="30.00" height="20.00" viewBox="0 0 30 20"><path d="M2 10 Q15 -5 28 10 Q15 25 2 10 Z" fill="none" stroke="#0070c0" stroke-width="2.8"/><circle cx="15" cy="10" r="3.6" fill="#0070c0"/></svg>
<svg class="a" style="left:2026.00px;top:301.50px;" width="25.00" height="25.00" viewBox="0 0 25 25"><path d="M12 3.5 H4.5 Q3 3.5 3 5 V20.5 Q3 22 4.5 22 H20 Q21.5 22 21.5 20.5 V13" fill="none" stroke="#0070c0" stroke-width="2.6"/><path d="M9 16.5 L9.6 13 L19 3.6 L22 6.6 L12.6 16 Z" fill="#0070c0"/><path d="M20 2.6 L21.3 1.3 L24.2 4.2 L23 5.5 Z" fill="#0070c0"/></svg>
<svg class="a" style="left:405.00px;top:385.00px;" width="130.00" height="95.00" viewBox="0 0 130 95"><g fill="#0070c0"><path d="M10.8 40.5 L67.8 73.5 L64.7 85.3 L10.5 54.6 Z"/><path d="M35.1 31 L92 64.1 L89.7 76.9 L34.7 44.5 Z"/><path d="M58.3 21.2 L115.3 55 L113.6 67.4 L58 35.7 Z"/><path d="M90.4 12.1 H99.1 V40 L96 46 L88 46 L90.4 40 Z"/></g><path d="M13 71.5 L37 64.5 M41 61 L61 55.5 M66 51 L87.5 45.5" fill="none" stroke="#fff" stroke-width="10.5" stroke-linecap="round"/><path d="M13 71.5 L37 64.5 M41 61 L61 55.5 M66 51 L87.5 45.5" fill="none" stroke="#0070c0" stroke-width="6.6" stroke-linecap="round"/><path d="M37 64.5 L41 61 M61 55.5 L66 51 M87.5 45.5 L93 42" fill="none" stroke="#0070c0" stroke-width="6.6"/></svg>
<svg class="a" style="left:1015.00px;top:376.00px;" width="72.00" height="92.00" viewBox="0 0 72 92"><path d="M35.8 7.7 L62.2 27.8 L35.8 47.9 L9.4 27.8 Z" fill="none" stroke="#0070c0" stroke-width="7.3" stroke-linejoin="miter"/><path d="M8.6 47 L35.8 66.6 L63 47" fill="none" stroke="#0070c0" stroke-width="7.3"/><path d="M8.6 65.2 L35.8 84.8 L63 65.2" fill="none" stroke="#0070c0" stroke-width="7.3"/></svg>
<svg class="a" style="left:1575.00px;top:368.00px;" width="95.00" height="112.00" viewBox="0 0 95 112"><path d="M4 5 C 20 40, 37 77, 49 89 Q 61 103, 84 105" fill="none" stroke="#0070c0" stroke-width="5.8"/><path d="M7 106.5 Q 32 102, 48 89 Q 65 74, 85 51" fill="none" stroke="#0070c0" stroke-width="5.8"/></svg>
<div class="t" style="left:557.60px;top:359.66px;font-size:19.3px;line-height:19.3px;color:#6e6e6e;transform:scaleX(0.963);transform-origin:0 0;">A<span style="font-size:75%;position:relative;top:0.32em;">d</span>:&nbsp; 104 acres</div>
<div class="t" style="left:557.60px;top:381.86px;font-size:19.3px;line-height:19.3px;color:#6e6e6e;transform:scaleX(0.963);transform-origin:0 0;">h:&nbsp; 200 ft</div>
<div class="t" style="left:557.60px;top:402.76px;font-size:19.3px;line-height:19.3px;color:#6e6e6e;transform:scaleX(0.963);transform-origin:0 0;">h<span style="font-size:75%;position:relative;top:0.32em;">f</span>:&nbsp; 200 ft</div>
<div class="t" style="left:557.60px;top:423.76px;font-size:19.3px;line-height:19.3px;color:#6e6e6e;transform:scaleX(0.963);transform-origin:0 0;">x<span style="font-size:75%;position:relative;top:0.32em;">e</span>:&nbsp; 430 ft</div>
<div class="t" style="left:557.60px;top:445.46px;font-size:19.3px;line-height:19.3px;color:#6e6e6e;transform:scaleX(0.963);transform-origin:0 0;">x<span style="font-size:75%;position:relative;top:0.32em;">f</span>:&nbsp; 430 ft</div>
<div class="t" style="left:557.60px;top:466.66px;font-size:19.3px;line-height:19.3px;color:#6e6e6e;transform:scaleX(0.963);transform-origin:0 0;">L<span style="font-size:75%;position:relative;top:0.32em;">w</span>:&nbsp; 5280 ft</div>
<div class="t" style="left:557.60px;top:487.96px;font-size:19.3px;line-height:19.3px;color:#6e6e6e;transform:scaleX(0.963);transform-origin:0 0;">N<span style="font-size:75%;position:relative;top:0.32em;">f</span>:&nbsp; 100.00</div>
<div class="t" style="left:731.50px;top:359.66px;font-size:19.3px;line-height:19.3px;color:#6e6e6e;transform:scaleX(0.963);transform-origin:0 0;">A√k:&nbsp; 285679 ft<span style="font-size:78%;position:relative;top:-0.42em;">2</span>md<span style="font-size:78%;position:relative;top:-0.42em;">1/2</span></div>
<div class="t" style="left:731.50px;top:381.86px;font-size:19.3px;line-height:19.3px;color:#6e6e6e;transform:scaleX(0.963);transform-origin:0 0;">k<span style="font-size:75%;position:relative;top:0.32em;">m</span>:&nbsp; 69 nd</div>
<div class="t" style="left:731.50px;top:402.76px;font-size:19.3px;line-height:19.3px;color:#6e6e6e;transform:scaleX(0.963);transform-origin:0 0;">φ<span style="font-size:75%;position:relative;top:0.32em;">m</span>:&nbsp; 0.0550</div>
<div class="t" style="left:731.50px;top:423.76px;font-size:19.3px;line-height:19.3px;color:#6e6e6e;transform:scaleX(0.963);transform-origin:0 0;">F<span style="font-size:75%;position:relative;top:0.32em;">cd</span>:&nbsp; 1000</div>
<div class="t" style="left:731.50px;top:445.46px;font-size:19.3px;line-height:19.3px;color:#6e6e6e;transform:scaleX(0.963);transform-origin:0 0;">k<span style="font-size:75%;position:relative;top:0.32em;">EFR</span>:&nbsp; -</div>
<div class="t" style="left:731.50px;top:466.66px;font-size:19.3px;line-height:19.3px;color:#6e6e6e;transform:scaleX(0.963);transform-origin:0 0;">y<span style="font-size:75%;position:relative;top:0.32em;">EFR</span>:&nbsp; -</div>
<div class="t" style="left:731.50px;top:487.96px;font-size:19.3px;line-height:19.3px;color:#6e6e6e;transform:scaleX(0.963);transform-origin:0 0;">y<span style="font-size:75%;position:relative;top:0.32em;">e</span>:&nbsp; 26 ft</div>
<div class="t" style="left:1133.30px;top:380.96px;font-size:19.3px;line-height:19.3px;color:#6e6e6e;transform:scaleX(0.963);transform-origin:0 0;">GOR<span style="font-size:75%;position:relative;top:0.32em;">i</span> :&nbsp; 1000 scf/STB</div>
<div class="t" style="left:1133.30px;top:401.46px;font-size:19.3px;line-height:19.3px;color:#6e6e6e;transform:scaleX(0.963);transform-origin:0 0;">p<span style="font-size:75%;position:relative;top:0.32em;">sat</span>:&nbsp; 3197 psia</div>
<div class="t" style="left:1133.30px;top:423.16px;font-size:19.3px;line-height:19.3px;color:#6e6e6e;transform:scaleX(0.963);transform-origin:0 0;">p<span style="font-size:75%;position:relative;top:0.32em;">Ri</span> :&nbsp; 12000 psia</div>
<div class="t" style="left:1133.30px;top:444.46px;font-size:19.3px;line-height:19.3px;color:#6e6e6e;transform:scaleX(0.963);transform-origin:0 0;">T<span style="font-size:75%;position:relative;top:0.32em;">R</span> :&nbsp; 200 F</div>
<div class="t" style="left:1307.20px;top:401.46px;font-size:19.3px;line-height:19.3px;color:#6e6e6e;transform:scaleX(0.963);transform-origin:0 0;">S<span style="font-size:75%;position:relative;top:0.32em;">wi</span>:&nbsp; 30.00 %</div>
<div class="t" style="left:1307.20px;top:423.16px;font-size:19.3px;line-height:19.3px;color:#6e6e6e;transform:scaleX(0.963);transform-origin:0 0;">S<span style="font-size:75%;position:relative;top:0.32em;">oi</span>:&nbsp; 70.00 %</div>
<div class="t" style="left:1307.20px;top:444.46px;font-size:19.3px;line-height:19.3px;color:#6e6e6e;transform:scaleX(0.963);transform-origin:0 0;">S<span style="font-size:75%;position:relative;top:0.32em;">gi</span>:&nbsp; 0.00 %</div>
<div class="t" style="left:1708.90px;top:360.16px;font-size:19.3px;line-height:19.3px;color:#6e6e6e;transform:scaleX(0.963);transform-origin:0 0;">S<span style="font-size:75%;position:relative;top:0.32em;">wc</span>:&nbsp; 20.00 %</div>
<div class="t" style="left:1708.90px;top:381.86px;font-size:19.3px;line-height:19.3px;color:#6e6e6e;transform:scaleX(0.963);transform-origin:0 0;">S<span style="font-size:75%;position:relative;top:0.32em;">org</span>:&nbsp; 20.00 %</div>
<div class="t" style="left:1708.90px;top:403.16px;font-size:19.3px;line-height:19.3px;color:#6e6e6e;transform:scaleX(0.963);transform-origin:0 0;">n<span style="font-size:75%;position:relative;top:0.32em;">w</span>:&nbsp; 1.8</div>
<div class="t" style="left:1708.90px;top:424.46px;font-size:19.3px;line-height:19.3px;color:#6e6e6e;transform:scaleX(0.963);transform-origin:0 0;">n<span style="font-size:75%;position:relative;top:0.32em;">g</span>:&nbsp; 1.5</div>
<div class="t" style="left:1708.90px;top:446.16px;font-size:19.3px;line-height:19.3px;color:#6e6e6e;transform:scaleX(0.963);transform-origin:0 0;">k<span style="font-size:75%;position:relative;top:0.32em;">rwro</span>:&nbsp; 1</div>
<div class="t" style="left:1708.90px;top:467.26px;font-size:19.3px;line-height:19.3px;color:#6e6e6e;transform:scaleX(0.963);transform-origin:0 0;">k<span style="font-size:75%;position:relative;top:0.32em;">rgro</span>:&nbsp; 1</div>
<div class="t" style="left:1883.30px;top:360.16px;font-size:19.3px;line-height:19.3px;color:#6e6e6e;transform:scaleX(0.963);transform-origin:0 0;">S<span style="font-size:75%;position:relative;top:0.32em;">orw</span>:&nbsp; 20.00 %</div>
<div class="t" style="left:1883.30px;top:381.86px;font-size:19.3px;line-height:19.3px;color:#6e6e6e;transform:scaleX(0.963);transform-origin:0 0;">S<span style="font-size:75%;position:relative;top:0.32em;">gc</span>:&nbsp; 5.00 %</div>
<div class="t" style="left:1883.30px;top:403.16px;font-size:19.3px;line-height:19.3px;color:#6e6e6e;transform:scaleX(0.963);transform-origin:0 0;">n<span style="font-size:75%;position:relative;top:0.32em;">ow</span>:&nbsp; 2</div>
<div class="t" style="left:1883.30px;top:424.46px;font-size:19.3px;line-height:19.3px;color:#6e6e6e;transform:scaleX(0.963);transform-origin:0 0;">n<span style="font-size:75%;position:relative;top:0.32em;">og</span>:&nbsp; 2</div>
<div class="t" style="left:1883.30px;top:446.16px;font-size:19.3px;line-height:19.3px;color:#6e6e6e;transform:scaleX(0.963);transform-origin:0 0;">k<span style="font-size:75%;position:relative;top:0.32em;">rocw</span>:&nbsp; 1</div>
<div class="a" style="left:392.70px;top:549px;width:765.30px;height:165px;border-radius:6px;background:#fff;overflow:hidden;box-shadow:0 2.5px 5px rgba(0,0,0,0.15),0 1px 2px rgba(0,0,0,0.10);"><div class="a" style="left:0;top:0;width:100%;height:48px;background:#4caf50;"></div><div class="a" style="left:0;top:144px;width:100%;height:21px;background:#4caf50;"></div></div>
<div class="t" style="left:415.00px;top:559.59px;font-size:25.29px;line-height:25.29px;color:#ffffff;font-weight:700;transform:scaleX(0.8776);transform-origin:0 0;">Oil</div>
<svg class="a" style="left:456.60px;top:558.50px;" width="29.00" height="29.00" viewBox="0 0 29 29"><circle cx="14.5" cy="14.5" r="12.2" fill="none" stroke="#fff" stroke-width="2.6"/><path d="M10.2 11.2 Q10.2 6.9 14.5 6.9 Q18.8 6.9 18.8 11 Q18.8 13.5 16 15 Q15.3 15.6 15.3 17.6 H13.4 Q13.4 14.6 15.2 13.3 Q16.8 12.4 16.8 11 Q16.8 8.9 14.5 8.9 Q12.2 8.9 12.2 11.2 Z" fill="#fff"/><rect x="13.4" y="19.3" width="2.2" height="2.3" fill="#fff"/></svg>
<div class="t" style="left:484.04px;top:602.17px;font-size:22.24px;line-height:22.24px;color:#1f1f1f;transform:scaleX(0.9300);transform-origin:0 0;">OOIP</div>
<div class="t" style="left:752.39px;top:602.17px;font-size:22.24px;line-height:22.24px;color:#1f1f1f;transform:scaleX(0.9300);transform-origin:0 0;">4426</div>
<div class="t" style="left:1012.47px;top:602.17px;font-size:22.24px;line-height:22.24px;color:#1f1f1f;transform:scaleX(0.9300);transform-origin:0 0;">MSTB</div>
<div class="t" style="left:496.11px;top:633.67px;font-size:22.24px;line-height:22.24px;color:#1f1f1f;transform:scaleX(0.9300);transform-origin:0 0;">Qo</div>
<div class="t" style="left:758.15px;top:633.67px;font-size:22.24px;line-height:22.24px;color:#1f1f1f;transform:scaleX(0.9300);transform-origin:0 0;">817</div>
<div class="t" style="left:1012.47px;top:633.67px;font-size:22.24px;line-height:22.24px;color:#1f1f1f;transform:scaleX(0.9300);transform-origin:0 0;">MSTB</div>
<div class="t" style="left:490.36px;top:665.87px;font-size:22.24px;line-height:22.24px;color:#1f1f1f;transform:scaleX(0.9300);transform-origin:0 0;">RFo</div>
<div class="t" style="left:749.52px;top:665.87px;font-size:22.24px;line-height:22.24px;color:#1f1f1f;transform:scaleX(0.9300);transform-origin:0 0;">18.47</div>
<div class="t" style="left:1032.01px;top:665.87px;font-size:22.24px;line-height:22.24px;color:#1f1f1f;transform:scaleX(0.9300);transform-origin:0 0;">%</div>
<div class="a" style="left:1190.00px;top:549px;width:764.50px;height:165px;border-radius:6px;background:#fff;overflow:hidden;box-shadow:0 2.5px 5px rgba(0,0,0,0.15),0 1px 2px rgba(0,0,0,0.10);"><div class="a" style="left:0;top:0;width:100%;height:48px;background:#f44336;"></div><div class="a" style="left:0;top:144px;width:100%;height:21px;background:#f44336;"></div></div>
<div class="t" style="left:1212.30px;top:559.59px;font-size:25.29px;line-height:25.29px;color:#ffffff;font-weight:700;transform:scaleX(0.8995);transform-origin:0 0;">Gas</div>
<svg class="a" style="left:1267.30px;top:558.50px;" width="29.00" height="29.00" viewBox="0 0 29 29"><circle cx="14.5" cy="14.5" r="12.2" fill="none" stroke="#fff" stroke-width="2.6"/><path d="M10.2 11.2 Q10.2 6.9 14.5 6.9 Q18.8 6.9 18.8 11 Q18.8 13.5 16 15 Q15.3 15.6 15.3 17.6 H13.4 Q13.4 14.6 15.2 13.3 Q16.8 12.4 16.8 11 Q16.8 8.9 14.5 8.9 Q12.2 8.9 12.2 11.2 Z" fill="#fff"/><rect x="13.4" y="19.3" width="2.2" height="2.3" fill="#fff"/></svg>
<div class="t" style="left:1281.34px;top:602.17px;font-size:22.24px;line-height:22.24px;color:#1f1f1f;transform:scaleX(0.9300);transform-origin:0 0;">OGIP</div>
<div class="t" style="left:1549.69px;top:602.17px;font-size:22.24px;line-height:22.24px;color:#1f1f1f;transform:scaleX(0.9300);transform-origin:0 0;">4426</div>
<div class="t" style="left:1808.06px;top:602.17px;font-size:22.24px;line-height:22.24px;color:#1f1f1f;transform:scaleX(0.9300);transform-origin:0 0;">MMscf</div>
<div class="t" style="left:1293.41px;top:633.67px;font-size:22.24px;line-height:22.24px;color:#1f1f1f;transform:scaleX(0.9300);transform-origin:0 0;">Qg</div>
<div class="t" style="left:1555.45px;top:633.67px;font-size:22.24px;line-height:22.24px;color:#1f1f1f;transform:scaleX(0.9300);transform-origin:0 0;">996</div>
<div class="t" style="left:1808.06px;top:633.67px;font-size:22.24px;line-height:22.24px;color:#1f1f1f;transform:scaleX(0.9300);transform-origin:0 0;">MMscf</div>
<div class="t" style="left:1287.66px;top:665.87px;font-size:22.24px;line-height:22.24px;color:#1f1f1f;transform:scaleX(0.9300);transform-origin:0 0;">RFg</div>
<div class="t" style="left:1546.82px;top:665.87px;font-size:22.24px;line-height:22.24px;color:#1f1f1f;transform:scaleX(0.9300);transform-origin:0 0;">22.51</div>
<div class="t" style="left:1829.31px;top:665.87px;font-size:22.24px;line-height:22.24px;color:#1f1f1f;transform:scaleX(0.9300);transform-origin:0 0;">%</div>
<div class="a" style="left:1986.80px;top:549px;width:765.00px;height:165px;border-radius:6px;background:#fff;overflow:hidden;box-shadow:0 2.5px 5px rgba(0,0,0,0.15),0 1px 2px rgba(0,0,0,0.10);"><div class="a" style="left:0;top:0;width:100%;height:48px;background:#0070c0;"></div><div class="a" style="left:0;top:144px;width:100%;height:21px;background:#0070c0;"></div></div>
<div class="t" style="left:2009.10px;top:559.59px;font-size:25.29px;line-height:25.29px;color:#ffffff;font-weight:700;transform:scaleX(0.9477);transform-origin:0 0;">Water</div>
<svg class="a" style="left:2086.80px;top:558.50px;" width="29.00" height="29.00" viewBox="0 0 29 29"><circle cx="14.5" cy="14.5" r="12.2" fill="none" stroke="#fff" stroke-width="2.6"/><path d="M10.2 11.2 Q10.2 6.9 14.5 6.9 Q18.8 6.9 18.8 11 Q18.8 13.5 16 15 Q15.3 15.6 15.3 17.6 H13.4 Q13.4 14.6 15.2 13.3 Q16.8 12.4 16.8 11 Q16.8 8.9 14.5 8.9 Q12.2 8.9 12.2 11.2 Z" fill="#fff"/><rect x="13.4" y="19.3" width="2.2" height="2.3" fill="#fff"/></svg>
<div class="t" style="left:2076.43px;top:602.17px;font-size:22.24px;line-height:22.24px;color:#1f1f1f;transform:scaleX(0.9300);transform-origin:0 0;">OWIP</div>
<div class="t" style="left:2346.49px;top:602.17px;font-size:22.24px;line-height:22.24px;color:#1f1f1f;transform:scaleX(0.9300);transform-origin:0 0;">2673</div>
<div class="t" style="left:2606.57px;top:602.17px;font-size:22.24px;line-height:22.24px;color:#1f1f1f;transform:scaleX(0.9300);transform-origin:0 0;">MSTB</div>
<div class="t" style="left:2088.49px;top:633.67px;font-size:22.24px;line-height:22.24px;color:#1f1f1f;transform:scaleX(0.9300);transform-origin:0 0;">Qw</div>
<div class="t" style="left:2358.00px;top:633.67px;font-size:22.24px;line-height:22.24px;color:#1f1f1f;transform:scaleX(0.9300);transform-origin:0 0;">68</div>
<div class="t" style="left:2606.57px;top:633.67px;font-size:22.24px;line-height:22.24px;color:#1f1f1f;transform:scaleX(0.9300);transform-origin:0 0;">MSTB</div>
<div class="t" style="left:2082.75px;top:665.87px;font-size:22.24px;line-height:22.24px;color:#1f1f1f;transform:scaleX(0.9300);transform-origin:0 0;">RFw</div>
<div class="t" style="left:2349.37px;top:665.87px;font-size:22.24px;line-height:22.24px;color:#1f1f1f;transform:scaleX(0.9300);transform-origin:0 0;">2.53</div>
<div class="t" style="left:2626.11px;top:665.87px;font-size:22.24px;line-height:22.24px;color:#1f1f1f;transform:scaleX(0.9300);transform-origin:0 0;">%</div>
<div class="a" style="left:2767.90px;top:542.80px;width:33.60px;height:922.90px;background:#f1f1f1;"></div>
<div class="a" style="left:2770.00px;top:577.00px;width:30.00px;height:502.50px;background:#c1c1c1;"></div>
<svg class="a" style="left:2777.00px;top:555.00px;" width="16.00" height="10.00" viewBox="0 0 16 10"><path d="M0 9 L8 1 L16 9 Z" fill="#a3a3a3"/></svg>
<svg class="a" style="left:2777.00px;top:1443.00px;" width="16.00" height="10.00" viewBox="0 0 16 10"><path d="M0 1 L16 1 L8 9 Z" fill="#505050"/></svg>
<div class="a" style="left:360px;top:720px;width:2407px;height:745.7px;overflow:hidden;">
<div class="a" style="left:-360px;top:-720px;width:2826px;height:1546px;">
<div class="a" style="left:393.00px;top:734.90px;width:786.30px;height:695.10px;background:#fff;border-radius:6px;box-shadow:0 1px 3px rgba(0,0,0,0.13),0 0 1px rgba(0,0,0,0.12);"></div>
<div class="a" style="left:1180.00px;top:734.90px;width:786.00px;height:695.10px;background:#fff;border-radius:6px;box-shadow:0 1px 3px rgba(0,0,0,0.13),0 0 1px rgba(0,0,0,0.12);"></div>
<div class="a" style="left:1966.50px;top:734.90px;width:785.10px;height:695.10px;background:#fff;border-radius:6px;box-shadow:0 1px 3px rgba(0,0,0,0.13),0 0 1px rgba(0,0,0,0.12);"></div>
<div class="a" style="left:393.00px;top:1417.40px;width:786.30px;height:142.60px;background:#fff;border-radius:6px;box-shadow:0 1px 3px rgba(0,0,0,0.13),0 0 1px rgba(0,0,0,0.12);"></div>
<div class="a" style="left:1180.00px;top:1417.40px;width:786.00px;height:142.60px;background:#fff;border-radius:6px;box-shadow:0 1px 3px rgba(0,0,0,0.13),0 0 1px rgba(0,0,0,0.12);"></div>
<div class="a" style="left:1966.50px;top:1417.60px;width:785.10px;height:142.40px;background:#fff;border-radius:6px;box-shadow:0 1px 3px rgba(0,0,0,0.13),0 0 1px rgba(0,0,0,0.12);"></div>
<div class="t" style="left:415.10px;top:743.31px;font-size:27.03px;line-height:27.03px;color:#1f1f1f;-webkit-text-stroke:1.22px #1f1f1f;transform:scaleX(0.9758);transform-origin:0 0;">Oil Rate</div>
<div class="t" style="left:1202.00px;top:743.31px;font-size:27.03px;line-height:27.03px;color:#1f1f1f;-webkit-text-stroke:1.22px #1f1f1f;transform:scaleX(0.9492);transform-origin:0 0;">Gas Rate</div>
<div class="t" style="left:1987.90px;top:743.31px;font-size:27.03px;line-height:27.03px;color:#1f1f1f;-webkit-text-stroke:1.22px #1f1f1f;transform:scaleX(0.9829);transform-origin:0 0;">Water Rate</div>
<div class="t" style="left:528.10px;top:747.73px;font-size:17.44px;line-height:17.44px;color:#0070c0;-webkit-text-stroke:0.59px #0070c0;letter-spacing:1.60px;transform:scaleX(0.7983);transform-origin:0 0;">LOGX</div>
<div class="a" style="left:594.30px;top:738px;width:66.70px;height:37px;border-radius:6px;background:#d6d6d6;"></div>
<div class="t" style="left:605.80px;top:747.73px;font-size:17.44px;line-height:17.44px;color:#0070c0;-webkit-text-stroke:0.59px #0070c0;letter-spacing:1.60px;transform:scaleX(0.7983);transform-origin:0 0;">LOGY</div>
<div class="t" style="left:678.10px;top:747.73px;font-size:17.44px;line-height:17.44px;color:#0070c0;-webkit-text-stroke:0.59px #0070c0;letter-spacing:1.60px;transform:scaleX(0.8535);transform-origin:0 0;">USE CUMULATIVES</div>
<div class="t" style="left:862.00px;top:747.73px;font-size:17.44px;line-height:17.44px;color:#0070c0;-webkit-text-stroke:0.59px #0070c0;letter-spacing:1.60px;transform:scaleX(0.8280);transform-origin:0 0;">DATES</div>
<div class="t" style="left:1327.80px;top:747.73px;font-size:17.44px;line-height:17.44px;color:#0070c0;-webkit-text-stroke:0.59px #0070c0;letter-spacing:1.60px;transform:scaleX(0.7983);transform-origin:0 0;">LOGX</div>
<div class="a" style="left:1394.20px;top:738px;width:65.60px;height:37px;border-radius:6px;background:#d6d6d6;"></div>
<div class="t" style="left:1405.10px;top:747.73px;font-size:17.44px;line-height:17.44px;color:#0070c0;-webkit-text-stroke:0.59px #0070c0;letter-spacing:1.60px;transform:scaleX(0.7983);transform-origin:0 0;">LOGY</div>
<div class="t" style="left:1477.50px;top:747.73px;font-size:17.44px;line-height:17.44px;color:#0070c0;-webkit-text-stroke:0.59px #0070c0;letter-spacing:1.60px;transform:scaleX(0.8535);transform-origin:0 0;">USE CUMULATIVES</div>
<div class="t" style="left:1661.30px;top:747.73px;font-size:17.44px;line-height:17.44px;color:#0070c0;-webkit-text-stroke:0.59px #0070c0;letter-spacing:1.60px;transform:scaleX(0.8280);transform-origin:0 0;">DATES</div>
<div class="t" style="left:2138.80px;top:747.73px;font-size:17.44px;line-height:17.44px;color:#0070c0;-webkit-text-stroke:0.59px #0070c0;letter-spacing:1.60px;transform:scaleX(0.7983);transform-origin:0 0;">LOGX</div>
<div class="a" style="left:2205.40px;top:738px;width:65.50px;height:37px;border-radius:6px;background:#d6d6d6;"></div>
<div class="t" style="left:2216.10px;top:747.73px;font-size:17.44px;line-height:17.44px;color:#0070c0;-webkit-text-stroke:0.59px #0070c0;letter-spacing:1.60px;transform:scaleX(0.7983);transform-origin:0 0;">LOGY</div>
<div class="t" style="left:2288.70px;top:747.73px;font-size:17.44px;line-height:17.44px;color:#0070c0;-webkit-text-stroke:0.59px #0070c0;letter-spacing:1.60px;transform:scaleX(0.8535);transform-origin:0 0;">USE CUMULATIVES</div>
<div class="t" style="left:2472.60px;top:747.73px;font-size:17.44px;line-height:17.44px;color:#0070c0;-webkit-text-stroke:0.59px #0070c0;letter-spacing:1.60px;transform:scaleX(0.8280);transform-origin:0 0;">DATES</div>
<svg class="a" style="left:437.80px;top:798.60px;" width="24.00" height="29.00" viewBox="0 0 24 29"><path d="M2.5 4 Q2.5 1.8 4.7 1.8 H13.5 L21.5 9.6 V24.6 Q21.5 26.8 19.3 26.8 H4.7 Q2.5 26.8 2.5 24.6 Z" fill="none" stroke="#0070c0" stroke-width="2.4" stroke-linejoin="round"/><path d="M13 1 L22.5 10.5 H13 Z" fill="#0070c0"/><circle cx="6.8" cy="12.2" r="2" fill="#0070c0"/><path d="M5.3 23.4 L11 17.7 L13.5 20 L19.6 14.8 V23.4 Z" fill="#0070c0"/></svg>
<svg class="a" style="left:486.90px;top:798.60px;" width="22.00" height="29.00" viewBox="0 0 22 29"><path d="M5.8 2.2 H12.7 V9.7 H17.4 L9.3 17.8 L1.2 9.7 H5.8 Z" fill="none" stroke="#0070c0" stroke-width="2.3" stroke-linejoin="miter"/><rect x="0.9" y="21.2" width="18.6" height="2.8" fill="#0070c0"/></svg>
<svg class="a" style="left:531.00px;top:798.60px;" width="29.00" height="29.00" viewBox="0 0 29 29"><path d="M2.2 8.5 V4.3 Q2.2 2.2 4.3 2.2 H8.3 M20.3 2.2 H24.5 Q26.6 2.2 26.6 4.3 V8.5 M26.6 20.3 V24.6 Q26.6 26.7 24.5 26.7 H20.3 M8.3 26.7 H4.3 Q2.2 26.7 2.2 24.6 V20.3" fill="none" stroke="#0070c0" stroke-width="2.4"/><circle cx="12.2" cy="11.6" r="5" fill="none" stroke="#0070c0" stroke-width="2.3"/><path d="M15.8 15.3 L21 20.5" stroke="#0070c0" stroke-width="2.6"/></svg>
<svg class="a" style="left:579.20px;top:798.60px;" width="29.00" height="29.00" viewBox="0 0 29 29"><rect x="2.2" y="2.2" width="23.8" height="24.4" rx="2.2" fill="none" stroke="#0070c0" stroke-width="2.4"/><path d="M14.1 5.2 L17.9 9.4 H10.3 Z M14.1 23.4 L17.9 19.2 H10.3 Z M5.2 14.3 L9.4 10.5 V18.1 Z M23 14.3 L18.8 10.5 V18.1 Z" fill="#0070c0"/><path d="M14.1 9 V11.8 M14.1 16.8 V19.6 M9.2 14.3 H12 M16.2 14.3 H19" stroke="#0070c0" stroke-width="2.3"/></svg>
<svg class="a" style="left:628.20px;top:799.10px;" width="27.00" height="28.00" viewBox="0 0 27 28"><path d="M1.9 9.4 V2.3 H9.1 M1.9 2.3 L9.8 10.2 M24.2 9.4 V2.3 H17 M24.2 2.3 L16.3 10.2 M1.9 17.8 V24.9 H9.1 M1.9 24.9 L9.8 17 M24.2 17.8 V24.9 H17 M24.2 24.9 L16.3 17" fill="none" stroke="#0070c0" stroke-width="2.6"/></svg>
<svg class="a" style="left:1224.00px;top:798.60px;" width="24.00" height="29.00" viewBox="0 0 24 29"><path d="M2.5 4 Q2.5 1.8 4.7 1.8 H13.5 L21.5 9.6 V24.6 Q21.5 26.8 19.3 26.8 H4.7 Q2.5 26.8 2.5 24.6 Z" fill="none" stroke="#0070c0" stroke-width="2.4" stroke-linejoin="round"/><path d="M13 1 L22.5 10.5 H13 Z" fill="#0070c0"/><circle cx="6.8" cy="12.2" r="2" fill="#0070c0"/><path d="M5.3 23.4 L11 17.7 L13.5 20 L19.6 14.8 V23.4 Z" fill="#0070c0"/></svg>
<svg class="a" style="left:1273.00px;top:798.60px;" width="22.00" height="29.00" viewBox="0 0 22 29"><path d="M5.8 2.2 H12.7 V9.7 H17.4 L9.3 17.8 L1.2 9.7 H5.8 Z" fill="none" stroke="#0070c0" stroke-width="2.3" stroke-linejoin="miter"/><rect x="0.9" y="21.2" width="18.6" height="2.8" fill="#0070c0"/></svg>
<svg class="a" style="left:1317.00px;top:798.60px;" width="29.00" height="29.00" viewBox="0 0 29 29"><path d="M2.2 8.5 V4.3 Q2.2 2.2 4.3 2.2 H8.3 M20.3 2.2 H24.5 Q26.6 2.2 26.6 4.3 V8.5 M26.6 20.3 V24.6 Q26.6 26.7 24.5 26.7 H20.3 M8.3 26.7 H4.3 Q2.2 26.7 2.2 24.6 V20.3" fill="none" stroke="#0070c0" stroke-width="2.4"/><circle cx="12.2" cy="11.6" r="5" fill="none" stroke="#0070c0" stroke-width="2.3"/><path d="M15.8 15.3 L21 20.5" stroke="#0070c0" stroke-width="2.6"/></svg>
<svg class="a" style="left:1365.50px;top:798.60px;" width="29.00" height="29.00" viewBox="0 0 29 29"><rect x="2.2" y="2.2" width="23.8" height="24.4" rx="2.2" fill="none" stroke="#0070c0" stroke-width="2.4"/><path d="M14.1 5.2 L17.9 9.4 H10.3 Z M14.1 23.4 L17.9 19.2 H10.3 Z M5.2 14.3 L9.4 10.5 V18.1 Z M23 14.3 L18.8 10.5 V18.1 Z" fill="#0070c0"/><path d="M14.1 9 V11.8 M14.1 16.8 V19.6 M9.2 14.3 H12 M16.2 14.3 H19" stroke="#0070c0" stroke-width="2.3"/></svg>
<svg class="a" style="left:1414.50px;top:799.10px;" width="27.00" height="28.00" viewBox="0 0 27 28"><path d="M1.9 9.4 V2.3 H9.1 M1.9 2.3 L9.8 10.2 M24.2 9.4 V2.3 H17 M24.2 2.3 L16.3 10.2 M1.9 17.8 V24.9 H9.1 M1.9 24.9 L9.8 17 M24.2 17.8 V24.9 H17 M24.2 24.9 L16.3 17" fill="none" stroke="#0070c0" stroke-width="2.6"/></svg>
<svg class="a" style="left:2010.00px;top:798.60px;" width="24.00" height="29.00" viewBox="0 0 24 29"><path d="M2.5 4 Q2.5 1.8 4.7 1.8 H13.5 L21.5 9.6 V24.6 Q21.5 26.8 19.3 26.8 H4.7 Q2.5 26.8 2.5 24.6 Z" fill="none" stroke="#0070c0" stroke-width="2.4" stroke-linejoin="round"/><path d="M13 1 L22.5 10.5 H13 Z" fill="#0070c0"/><circle cx="6.8" cy="12.2" r="2" fill="#0070c0"/><path d="M5.3 23.4 L11 17.7 L13.5 20 L19.6 14.8 V23.4 Z" fill="#0070c0"/></svg>
<svg class="a" style="left:2059.00px;top:798.60px;" width="22.00" height="29.00" viewBox="0 0 22 29"><path d="M5.8 2.2 H12.7 V9.7 H17.4 L9.3 17.8 L1.2 9.7 H5.8 Z" fill="none" stroke="#0070c0" stroke-width="2.3" stroke-linejoin="miter"/><rect x="0.9" y="21.2" width="18.6" height="2.8" fill="#0070c0"/></svg>
<svg class="a" style="left:2103.00px;top:798.60px;" width="29.00" height="29.00" viewBox="0 0 29 29"><path d="M2.2 8.5 V4.3 Q2.2 2.2 4.3 2.2 H8.3 M20.3 2.2 H24.5 Q26.6 2.2 26.6 4.3 V8.5 M26.6 20.3 V24.6 Q26.6 26.7 24.5 26.7 H20.3 M8.3 26.7 H4.3 Q2.2 26.7 2.2 24.6 V20.3" fill="none" stroke="#0070c0" stroke-width="2.4"/><circle cx="12.2" cy="11.6" r="5" fill="none" stroke="#0070c0" stroke-width="2.3"/><path d="M15.8 15.3 L21 20.5" stroke="#0070c0" stroke-width="2.6"/></svg>
<svg class="a" style="left:2151.50px;top:798.60px;" width="29.00" height="29.00" viewBox="0 0 29 29"><rect x="2.2" y="2.2" width="23.8" height="24.4" rx="2.2" fill="none" stroke="#0070c0" stroke-width="2.4"/><path d="M14.1 5.2 L17.9 9.4 H10.3 Z M14.1 23.4 L17.9 19.2 H10.3 Z M5.2 14.3 L9.4 10.5 V18.1 Z M23 14.3 L18.8 10.5 V18.1 Z" fill="#0070c0"/><path d="M14.1 9 V11.8 M14.1 16.8 V19.6 M9.2 14.3 H12 M16.2 14.3 H19" stroke="#0070c0" stroke-width="2.3"/></svg>
<svg class="a" style="left:2200.50px;top:799.10px;" width="27.00" height="28.00" viewBox="0 0 27 28"><path d="M1.9 9.4 V2.3 H9.1 M1.9 2.3 L9.8 10.2 M24.2 9.4 V2.3 H17 M24.2 2.3 L16.3 10.2 M1.9 17.8 V24.9 H9.1 M1.9 24.9 L9.8 17 M24.2 17.8 V24.9 H17 M24.2 24.9 L16.3 17" fill="none" stroke="#0070c0" stroke-width="2.6"/></svg>
<div class="t" style="left:415.70px;top:1437.15px;font-size:28.05px;line-height:28.05px;color:#1f1f1f;-webkit-text-stroke:1.26px #1f1f1f;transform:scaleX(0.9841);transform-origin:0 0;">Bottomhole Pressure</div>
<div class="t" style="left:694.30px;top:1443.03px;font-size:17.44px;line-height:17.44px;color:#0070c0;-webkit-text-stroke:0.59px #0070c0;letter-spacing:1.60px;transform:scaleX(0.8367);transform-origin:0 0;">WELLHEAD</div>
<div class="t" style="left:817.30px;top:1443.03px;font-size:17.44px;line-height:17.44px;color:#0070c0;-webkit-text-stroke:0.59px #0070c0;letter-spacing:1.60px;transform:scaleX(0.8233);transform-origin:0 0;">DATES</div>
<svg class="a" style="left:920.00px;top:1439.00px;" width="24.00" height="29.00" viewBox="0 0 24 29"><path d="M2.5 4 Q2.5 1.8 4.7 1.8 H13.5 L21.5 9.6 V24.6 Q21.5 26.8 19.3 26.8 H4.7 Q2.5 26.8 2.5 24.6 Z" fill="none" stroke="#0070c0" stroke-width="2.4" stroke-linejoin="round"/><path d="M13 1 L22.5 10.5 H13 Z" fill="#0070c0"/><circle cx="6.8" cy="12.2" r="2" fill="#0070c0"/><path d="M5.3 23.4 L11 17.7 L13.5 20 L19.6 14.8 V23.4 Z" fill="#0070c0"/></svg>
<svg class="a" style="left:968.90px;top:1439.00px;" width="22.00" height="29.00" viewBox="0 0 22 29"><path d="M5.8 2.2 H12.7 V9.7 H17.4 L9.3 17.8 L1.2 9.7 H5.8 Z" fill="none" stroke="#0070c0" stroke-width="2.3" stroke-linejoin="miter"/><rect x="0.9" y="21.2" width="18.6" height="2.8" fill="#0070c0"/></svg>
<svg class="a" style="left:1013.00px;top:1439.00px;" width="29.00" height="29.00" viewBox="0 0 29 29"><path d="M2.2 8.5 V4.3 Q2.2 2.2 4.3 2.2 H8.3 M20.3 2.2 H24.5 Q26.6 2.2 26.6 4.3 V8.5 M26.6 20.3 V24.6 Q26.6 26.7 24.5 26.7 H20.3 M8.3 26.7 H4.3 Q2.2 26.7 2.2 24.6 V20.3" fill="none" stroke="#0070c0" stroke-width="2.4"/><circle cx="12.2" cy="11.6" r="5" fill="none" stroke="#0070c0" stroke-width="2.3"/><path d="M15.8 15.3 L21 20.5" stroke="#0070c0" stroke-width="2.6"/></svg>
<svg class="a" style="left:1061.30px;top:1439.00px;" width="29.00" height="29.00" viewBox="0 0 29 29"><rect x="2.2" y="2.2" width="23.8" height="24.4" rx="2.2" fill="none" stroke="#0070c0" stroke-width="2.4"/><path d="M14.1 5.2 L17.9 9.4 H10.3 Z M14.1 23.4 L17.9 19.2 H10.3 Z M5.2 14.3 L9.4 10.5 V18.1 Z M23 14.3 L18.8 10.5 V18.1 Z" fill="#0070c0"/><path d="M14.1 9 V11.8 M14.1 16.8 V19.6 M9.2 14.3 H12 M16.2 14.3 H19" stroke="#0070c0" stroke-width="2.3"/></svg>
<svg class="a" style="left:1110.40px;top:1439.50px;" width="27.00" height="28.00" viewBox="0 0 27 28"><path d="M1.9 9.4 V2.3 H9.1 M1.9 2.3 L9.8 10.2 M24.2 9.4 V2.3 H17 M24.2 2.3 L16.3 10.2 M1.9 17.8 V24.9 H9.1 M1.9 24.9 L9.8 17 M24.2 17.8 V24.9 H17 M24.2 24.9 L16.3 17" fill="none" stroke="#0070c0" stroke-width="2.6"/></svg>
<div class="t" style="left:1202.00px;top:1424.31px;font-size:27.03px;line-height:27.03px;color:#1f1f1f;-webkit-text-stroke:1.22px #1f1f1f;transform:scaleX(0.9953);transform-origin:0 0;">Gas/Oil Ratio</div>
<div class="t" style="left:1375.00px;top:1429.73px;font-size:17.44px;line-height:17.44px;color:#0070c0;-webkit-text-stroke:0.59px #0070c0;letter-spacing:1.60px;transform:scaleX(0.8535);transform-origin:0 0;">USE CUMULATIVES</div>
<div class="t" style="left:1569.00px;top:1429.73px;font-size:17.44px;line-height:17.44px;color:#0070c0;-webkit-text-stroke:0.59px #0070c0;letter-spacing:1.60px;transform:scaleX(0.7523);transform-origin:0 0;">OGR</div>
<div class="t" style="left:1636.50px;top:1429.73px;font-size:17.44px;line-height:17.44px;color:#0070c0;-webkit-text-stroke:0.59px #0070c0;letter-spacing:1.60px;transform:scaleX(0.8280);transform-origin:0 0;">DATES</div>
<div class="t" style="left:1987.90px;top:1423.31px;font-size:27.03px;line-height:27.03px;color:#1f1f1f;-webkit-text-stroke:1.22px #1f1f1f;transform:scaleX(0.9943);transform-origin:0 0;">Water Cut</div>
<div class="t" style="left:2120.70px;top:1428.73px;font-size:17.44px;line-height:17.44px;color:#0070c0;-webkit-text-stroke:0.59px #0070c0;letter-spacing:1.60px;transform:scaleX(0.8535);transform-origin:0 0;">USE CUMULATIVES</div>
<div class="t" style="left:2304.50px;top:1428.73px;font-size:17.44px;line-height:17.44px;color:#0070c0;-webkit-text-stroke:0.59px #0070c0;letter-spacing:1.60px;transform:scaleX(0.8280);transform-origin:0 0;">DATES</div>
<div class="t" style="left:2390.30px;top:1428.73px;font-size:17.44px;line-height:17.44px;color:#0070c0;-webkit-text-stroke:0.59px #0070c0;letter-spacing:1.60px;transform:scaleX(0.8012);transform-origin:0 0;">WOR</div>
<div class="t" style="left:2466.90px;top:1428.73px;font-size:17.44px;line-height:17.44px;color:#0070c0;-webkit-text-stroke:0.59px #0070c0;letter-spacing:1.60px;transform:scaleX(0.7907);transform-origin:0 0;">WGR</div>
<svg class="a" style="left:0;top:0;" width="2826" height="1546" viewBox="0 0 2826 1546"><rect x="508.30" y="1304.61" width="624.10" height="1.5" fill="#e4e4e4"/><rect x="508.30" y="1249.69" width="624.10" height="1.5" fill="#e4e4e4"/><rect x="508.30" y="1208.15" width="624.10" height="1.5" fill="#e4e4e4"/><rect x="508.30" y="1166.61" width="624.10" height="1.5" fill="#e4e4e4"/><rect x="508.30" y="1111.69" width="624.10" height="1.5" fill="#e4e4e4"/><rect x="508.30" y="1070.15" width="624.10" height="1.5" fill="#e4e4e4"/><rect x="508.30" y="1028.61" width="624.10" height="1.5" fill="#e4e4e4"/><rect x="508.30" y="973.69" width="624.10" height="1.5" fill="#e4e4e4"/><rect x="508.30" y="932.15" width="624.10" height="1.5" fill="#e4e4e4"/><rect x="632.33" y="900.30" width="1.5" height="445.90" fill="#e4e4e4"/><rect x="757.11" y="900.30" width="1.5" height="445.90" fill="#e4e4e4"/><rect x="881.89" y="900.30" width="1.5" height="445.90" fill="#e4e4e4"/><rect x="1006.67" y="900.30" width="1.5" height="445.90" fill="#e4e4e4"/><defs><clipPath id="coil"><rect x="507.30" y="899.30" width="626.10" height="447.90"/></clipPath></defs><g clip-path="url(#coil)"><path d="M514.00 1010.00 C514.60 1006.67 515.20 1003.01 515.80 1000.00 C516.63 995.82 517.47 993.38 518.30 988.70 C519.00 984.77 519.70 976.65 520.40 973.40 C521.83 966.75 523.27 963.25 524.70 959.70 C526.70 954.75 528.70 951.03 530.70 947.80 C533.23 943.71 535.77 940.52 538.30 937.60 C541.43 933.99 544.57 930.83 547.70 928.20 C551.67 924.87 555.63 921.76 559.60 919.70 C565.30 916.74 571.00 914.53 576.70 912.90 C582.37 911.28 588.03 909.73 593.70 909.10 C601.63 908.22 609.57 907.82 617.50 907.40 C622.07 907.16 626.63 906.80 631.20 906.80 C633.47 906.80 635.73 907.00 638.00 907.00 C640.30 907.00 642.60 903.83 644.90 903.30 C647.17 902.78 649.43 902.30 651.70 902.30 C655.10 902.30 658.50 902.94 661.90 903.60 C668.70 904.93 675.50 911.48 682.30 915.50 C693.67 922.22 705.03 929.77 716.40 936.00 C730.60 943.78 744.80 951.57 759.00 957.30 C772.67 962.82 786.33 966.68 800.00 971.20 C819.80 977.75 839.60 985.92 859.40 990.30 C868.20 992.25 877.00 994.04 885.80 995.00 C910.00 997.65 934.20 997.74 958.40 1000.20 C976.00 1001.99 993.60 1006.27 1011.20 1008.80 C1051.80 1014.64 1092.40 1018.93 1133.00 1024.00" fill="none" stroke="#008000" stroke-width="12" stroke-linecap="round" stroke-linejoin="round"/><circle cx="510.70" cy="1104.90" r="3.9" fill="none" stroke="#008000" stroke-width="2.2"/><circle cx="510.70" cy="1063.40" r="3.9" fill="none" stroke="#008000" stroke-width="2.2"/><circle cx="511.20" cy="1043.30" r="3.9" fill="none" stroke="#008000" stroke-width="2.2"/><circle cx="512.00" cy="1032.20" r="3.9" fill="none" stroke="#008000" stroke-width="2.2"/><circle cx="512.90" cy="1023.70" r="3.9" fill="none" stroke="#008000" stroke-width="2.2"/><circle cx="513.30" cy="1017.00" r="3.9" fill="none" stroke="#008000" stroke-width="2.2"/><circle cx="513.80" cy="1011.00" r="3.9" fill="none" stroke="#008000" stroke-width="2.2"/><circle cx="514.30" cy="1006.00" r="3.9" fill="none" stroke="#008000" stroke-width="2.2"/><circle cx="514.80" cy="1001.00" r="3.9" fill="none" stroke="#008000" stroke-width="2.2"/><path d="M508.30 1043.30 L508.80 1014.00 L510.20 971.70 L513.60 942.70 L515.30 932.50 L837.60 934.00 L856.80 929.30 L908.20 947.30 L959.70 962.00 L1012.50 973.50 L1099.60 987.00 L1133.40 991.30" fill="none" stroke="#000" stroke-width="2.6" stroke-linejoin="round"/></g><path d="M507.30 899.30 H1133.40 M507.30 899.30 V1347.20" stroke="#000" stroke-width="1.4" fill="none"/><path d="M1133.40 898.60 V1348.20 M506.60 1347.20 H1134.40" stroke="#000" stroke-width="2.4" fill="none"/><rect x="502.00" y="1345.65" width="5.3" height="2.5" fill="#000"/><text x="496.30" y="1356.10" text-anchor="end" font-size="26.5" fill="#1a1a1a" style="font-family:&quot;Liberation Sans&quot;,sans-serif;">1</text><rect x="502.00" y="1304.11" width="5.3" height="2.5" fill="#000"/><text x="496.80" y="1311.26" text-anchor="end" font-size="16.5" fill="#1a1a1a" style="font-family:&quot;Liberation Sans&quot;,sans-serif;">2</text><rect x="502.00" y="1249.19" width="5.3" height="2.5" fill="#000"/><text x="496.80" y="1256.34" text-anchor="end" font-size="16.5" fill="#1a1a1a" style="font-family:&quot;Liberation Sans&quot;,sans-serif;">5</text><rect x="502.00" y="1207.65" width="5.3" height="2.5" fill="#000"/><text x="496.30" y="1218.10" text-anchor="end" font-size="26.5" fill="#1a1a1a" style="font-family:&quot;Liberation Sans&quot;,sans-serif;">10</text><rect x="502.00" y="1166.11" width="5.3" height="2.5" fill="#000"/><text x="496.80" y="1173.26" text-anchor="end" font-size="16.5" fill="#1a1a1a" style="font-family:&quot;Liberation Sans&quot;,sans-serif;">2</text><rect x="502.00" y="1111.19" width="5.3" height="2.5" fill="#000"/><text x="496.80" y="1118.34" text-anchor="end" font-size="16.5" fill="#1a1a1a" style="font-family:&quot;Liberation Sans&quot;,sans-serif;">5</text><rect x="502.00" y="1069.65" width="5.3" height="2.5" fill="#000"/><text x="485.30" y="1080.10" text-anchor="end" font-size="26.5" fill="#1a1a1a" style="font-family:&quot;Liberation Sans&quot;,sans-serif;">10</text><text x="496.80" y="1068.70" text-anchor="end" font-size="18.5" fill="#1a1a1a" style="font-family:&quot;Liberation Sans&quot;,sans-serif;">2</text><rect x="502.00" y="1028.11" width="5.3" height="2.5" fill="#000"/><text x="496.80" y="1035.26" text-anchor="end" font-size="16.5" fill="#1a1a1a" style="font-family:&quot;Liberation Sans&quot;,sans-serif;">2</text><rect x="502.00" y="973.19" width="5.3" height="2.5" fill="#000"/><text x="496.80" y="980.34" text-anchor="end" font-size="16.5" fill="#1a1a1a" style="font-family:&quot;Liberation Sans&quot;,sans-serif;">5</text><rect x="502.00" y="931.65" width="5.3" height="2.5" fill="#000"/><text x="485.30" y="942.10" text-anchor="end" font-size="26.5" fill="#1a1a1a" style="font-family:&quot;Liberation Sans&quot;,sans-serif;">10</text><text x="496.80" y="930.70" text-anchor="end" font-size="18.5" fill="#1a1a1a" style="font-family:&quot;Liberation Sans&quot;,sans-serif;">3</text><rect x="507.00" y="1347.20" width="2.6" height="6" fill="#000"/><text x="508.30" y="1378.2" text-anchor="middle" font-size="20" fill="#1a1a1a" style="font-family:&quot;Liberation Sans&quot;,sans-serif;">0</text><rect x="631.78" y="1347.20" width="2.6" height="6" fill="#000"/><text x="633.08" y="1378.2" text-anchor="middle" font-size="20" fill="#1a1a1a" style="font-family:&quot;Liberation Sans&quot;,sans-serif;">200</text><rect x="756.56" y="1347.20" width="2.6" height="6" fill="#000"/><text x="757.86" y="1378.2" text-anchor="middle" font-size="20" fill="#1a1a1a" style="font-family:&quot;Liberation Sans&quot;,sans-serif;">400</text><rect x="881.34" y="1347.20" width="2.6" height="6" fill="#000"/><text x="882.64" y="1378.2" text-anchor="middle" font-size="20" fill="#1a1a1a" style="font-family:&quot;Liberation Sans&quot;,sans-serif;">600</text><rect x="1006.12" y="1347.20" width="2.6" height="6" fill="#000"/><text x="1007.42" y="1378.2" text-anchor="middle" font-size="20" fill="#1a1a1a" style="font-family:&quot;Liberation Sans&quot;,sans-serif;">800</text><rect x="1130.90" y="1347.20" width="2.6" height="6" fill="#000"/><text x="1132.20" y="1378.2" text-anchor="middle" font-size="20" fill="#1a1a1a" style="font-family:&quot;Liberation Sans&quot;,sans-serif;">1000</text><text x="820.25" y="1402.8" text-anchor="middle" font-size="20.5" font-weight="700" fill="#000" style="font-family:&quot;Liberation Sans&quot;,sans-serif;">Time (days)</text><text x="0" y="0" transform="translate(451.00 1123.30) rotate(-90)" text-anchor="middle" font-size="20.5" font-weight="700" fill="#000" style="font-family:&quot;Liberation Sans&quot;,sans-serif;" textLength="184.6" lengthAdjust="spacingAndGlyphs">Oil Rate (STB/day)</text><rect x="668.20" y="848.00" width="304.30" height="47.50" fill="#fff" stroke="#000" stroke-width="1.5"/><circle cx="695.50" cy="872.20" r="4.1" fill="none" stroke="#008000" stroke-width="2.3"/><text x="723.20" y="880.00" font-size="21.5" fill="#1a1a1a" style="font-family:&quot;Liberation Sans&quot;,sans-serif;" textLength="86.9" lengthAdjust="spacingAndGlyphs">Historical</text><rect x="823.50" y="870.90" width="39.5" height="2.6" fill="#000"/><text x="870.70" y="880.00" font-size="21.5" fill="#1a1a1a" style="font-family:&quot;Liberation Sans&quot;,sans-serif;" textLength="93.8" lengthAdjust="spacingAndGlyphs">Simulated</text></svg>
<svg class="a" style="left:0;top:0;" width="2826" height="1546" viewBox="0 0 2826 1546"><rect x="1294.50" y="1312.45" width="623.70" height="1.5" fill="#e4e4e4"/><rect x="1294.50" y="1267.90" width="623.70" height="1.5" fill="#e4e4e4"/><rect x="1294.50" y="1234.20" width="623.70" height="1.5" fill="#e4e4e4"/><rect x="1294.50" y="1200.50" width="623.70" height="1.5" fill="#e4e4e4"/><rect x="1294.50" y="1155.95" width="623.70" height="1.5" fill="#e4e4e4"/><rect x="1294.50" y="1122.25" width="623.70" height="1.5" fill="#e4e4e4"/><rect x="1294.50" y="1088.55" width="623.70" height="1.5" fill="#e4e4e4"/><rect x="1294.50" y="1044.00" width="623.70" height="1.5" fill="#e4e4e4"/><rect x="1294.50" y="1010.30" width="623.70" height="1.5" fill="#e4e4e4"/><rect x="1294.50" y="976.60" width="623.70" height="1.5" fill="#e4e4e4"/><rect x="1294.50" y="932.05" width="623.70" height="1.5" fill="#e4e4e4"/><rect x="1418.29" y="900.30" width="1.5" height="445.90" fill="#e4e4e4"/><rect x="1543.13" y="900.30" width="1.5" height="445.90" fill="#e4e4e4"/><rect x="1667.97" y="900.30" width="1.5" height="445.90" fill="#e4e4e4"/><rect x="1792.81" y="900.30" width="1.5" height="445.90" fill="#e4e4e4"/><defs><clipPath id="cgas"><rect x="1293.50" y="899.30" width="625.70" height="447.90"/></clipPath></defs><g clip-path="url(#cgas)"><path d="M1297.00 1188.00 C1298.67 1181.23 1300.33 1172.15 1302.00 1167.70 C1306.00 1157.01 1310.00 1151.19 1314.00 1145.60 C1319.67 1137.68 1325.33 1131.08 1331.00 1126.90 C1339.53 1120.61 1348.07 1115.73 1356.60 1113.20 C1367.97 1109.82 1379.33 1108.07 1390.70 1106.40 C1400.37 1104.98 1410.03 1104.93 1419.70 1103.00 C1423.13 1102.31 1426.57 1098.80 1430.00 1098.80 C1432.80 1098.80 1435.60 1098.80 1438.40 1098.80 C1448.07 1098.80 1457.73 1088.50 1467.40 1085.00 C1475.90 1081.93 1484.40 1078.42 1492.90 1077.50 C1501.43 1076.58 1509.97 1075.80 1518.50 1075.80 C1527.00 1075.80 1535.50 1078.09 1544.00 1080.00 C1555.33 1082.55 1566.67 1088.29 1578.00 1092.80 C1585.33 1095.72 1592.67 1099.95 1600.00 1102.00 C1622.00 1108.15 1644.00 1112.00 1666.00 1114.60 C1683.60 1116.68 1701.20 1117.93 1718.80 1119.20 C1740.80 1120.78 1762.80 1121.90 1784.80 1123.20 C1806.80 1124.50 1828.80 1125.72 1850.80 1127.00 C1873.53 1128.32 1896.27 1129.67 1919.00 1131.00" fill="none" stroke="#ff0000" stroke-width="12" stroke-linecap="round" stroke-linejoin="round"/><circle cx="1296.00" cy="1263.00" r="3.9" fill="none" stroke="#ff0000" stroke-width="2.2"/><circle cx="1296.00" cy="1229.00" r="3.9" fill="none" stroke="#ff0000" stroke-width="2.2"/><circle cx="1297.00" cy="1213.70" r="3.9" fill="none" stroke="#ff0000" stroke-width="2.2"/><circle cx="1298.00" cy="1204.40" r="3.9" fill="none" stroke="#ff0000" stroke-width="2.2"/><circle cx="1298.50" cy="1197.00" r="3.9" fill="none" stroke="#ff0000" stroke-width="2.2"/><circle cx="1299.00" cy="1191.00" r="3.9" fill="none" stroke="#ff0000" stroke-width="2.2"/><circle cx="1299.50" cy="1186.00" r="3.9" fill="none" stroke="#ff0000" stroke-width="2.2"/><circle cx="1300.00" cy="1181.00" r="3.9" fill="none" stroke="#ff0000" stroke-width="2.2"/><path d="M1295.00 1213.70 L1296.00 1175.00 L1297.00 1150.70 L1301.30 1123.50 L1919.20 1123.50" fill="none" stroke="#000" stroke-width="2.6" stroke-linejoin="round"/></g><path d="M1293.50 899.30 H1919.20 M1293.50 899.30 V1347.20" stroke="#000" stroke-width="1.4" fill="none"/><path d="M1919.20 898.60 V1348.20 M1292.80 1347.20 H1920.20" stroke="#000" stroke-width="2.4" fill="none"/><rect x="1288.20" y="1345.65" width="5.3" height="2.5" fill="#000"/><text x="1282.50" y="1356.10" text-anchor="end" font-size="26.5" fill="#1a1a1a" style="font-family:&quot;Liberation Sans&quot;,sans-serif;">10</text><rect x="1288.20" y="1311.95" width="5.3" height="2.5" fill="#000"/><text x="1283.00" y="1319.10" text-anchor="end" font-size="16.5" fill="#1a1a1a" style="font-family:&quot;Liberation Sans&quot;,sans-serif;">2</text><rect x="1288.20" y="1267.40" width="5.3" height="2.5" fill="#000"/><text x="1283.00" y="1274.55" text-anchor="end" font-size="16.5" fill="#1a1a1a" style="font-family:&quot;Liberation Sans&quot;,sans-serif;">5</text><rect x="1288.20" y="1233.70" width="5.3" height="2.5" fill="#000"/><text x="1271.50" y="1244.15" text-anchor="end" font-size="26.5" fill="#1a1a1a" style="font-family:&quot;Liberation Sans&quot;,sans-serif;">10</text><text x="1283.00" y="1232.75" text-anchor="end" font-size="18.5" fill="#1a1a1a" style="font-family:&quot;Liberation Sans&quot;,sans-serif;">2</text><rect x="1288.20" y="1200.00" width="5.3" height="2.5" fill="#000"/><text x="1283.00" y="1207.15" text-anchor="end" font-size="16.5" fill="#1a1a1a" style="font-family:&quot;Liberation Sans&quot;,sans-serif;">2</text><rect x="1288.20" y="1155.45" width="5.3" height="2.5" fill="#000"/><text x="1283.00" y="1162.60" text-anchor="end" font-size="16.5" fill="#1a1a1a" style="font-family:&quot;Liberation Sans&quot;,sans-serif;">5</text><rect x="1288.20" y="1121.75" width="5.3" height="2.5" fill="#000"/><text x="1271.50" y="1132.20" text-anchor="end" font-size="26.5" fill="#1a1a1a" style="font-family:&quot;Liberation Sans&quot;,sans-serif;">10</text><text x="1283.00" y="1120.80" text-anchor="end" font-size="18.5" fill="#1a1a1a" style="font-family:&quot;Liberation Sans&quot;,sans-serif;">3</text><rect x="1288.20" y="1088.05" width="5.3" height="2.5" fill="#000"/><text x="1283.00" y="1095.20" text-anchor="end" font-size="16.5" fill="#1a1a1a" style="font-family:&quot;Liberation Sans&quot;,sans-serif;">2</text><rect x="1288.20" y="1043.50" width="5.3" height="2.5" fill="#000"/><text x="1283.00" y="1050.65" text-anchor="end" font-size="16.5" fill="#1a1a1a" style="font-family:&quot;Liberation Sans&quot;,sans-serif;">5</text><rect x="1288.20" y="1009.80" width="5.3" height="2.5" fill="#000"/><text x="1271.50" y="1020.25" text-anchor="end" font-size="26.5" fill="#1a1a1a" style="font-family:&quot;Liberation Sans&quot;,sans-serif;">10</text><text x="1283.00" y="1008.85" text-anchor="end" font-size="18.5" fill="#1a1a1a" style="font-family:&quot;Liberation Sans&quot;,sans-serif;">4</text><rect x="1288.20" y="976.10" width="5.3" height="2.5" fill="#000"/><text x="1283.00" y="983.25" text-anchor="end" font-size="16.5" fill="#1a1a1a" style="font-family:&quot;Liberation Sans&quot;,sans-serif;">2</text><rect x="1288.20" y="931.55" width="5.3" height="2.5" fill="#000"/><text x="1283.00" y="938.70" text-anchor="end" font-size="16.5" fill="#1a1a1a" style="font-family:&quot;Liberation Sans&quot;,sans-serif;">5</text><rect x="1288.20" y="897.85" width="5.3" height="2.5" fill="#000"/><text x="1271.50" y="908.30" text-anchor="end" font-size="26.5" fill="#1a1a1a" style="font-family:&quot;Liberation Sans&quot;,sans-serif;">10</text><text x="1283.00" y="896.90" text-anchor="end" font-size="18.5" fill="#1a1a1a" style="font-family:&quot;Liberation Sans&quot;,sans-serif;">5</text><rect x="1292.90" y="1347.20" width="2.6" height="6" fill="#000"/><text x="1294.20" y="1378.2" text-anchor="middle" font-size="20" fill="#1a1a1a" style="font-family:&quot;Liberation Sans&quot;,sans-serif;">0</text><rect x="1417.74" y="1347.20" width="2.6" height="6" fill="#000"/><text x="1419.04" y="1378.2" text-anchor="middle" font-size="20" fill="#1a1a1a" style="font-family:&quot;Liberation Sans&quot;,sans-serif;">200</text><rect x="1542.58" y="1347.20" width="2.6" height="6" fill="#000"/><text x="1543.88" y="1378.2" text-anchor="middle" font-size="20" fill="#1a1a1a" style="font-family:&quot;Liberation Sans&quot;,sans-serif;">400</text><rect x="1667.42" y="1347.20" width="2.6" height="6" fill="#000"/><text x="1668.72" y="1378.2" text-anchor="middle" font-size="20" fill="#1a1a1a" style="font-family:&quot;Liberation Sans&quot;,sans-serif;">600</text><rect x="1792.26" y="1347.20" width="2.6" height="6" fill="#000"/><text x="1793.56" y="1378.2" text-anchor="middle" font-size="20" fill="#1a1a1a" style="font-family:&quot;Liberation Sans&quot;,sans-serif;">800</text><rect x="1917.10" y="1347.20" width="2.6" height="6" fill="#000"/><text x="1918.40" y="1378.2" text-anchor="middle" font-size="20" fill="#1a1a1a" style="font-family:&quot;Liberation Sans&quot;,sans-serif;">1000</text><text x="1606.30" y="1402.8" text-anchor="middle" font-size="20.5" font-weight="700" fill="#000" style="font-family:&quot;Liberation Sans&quot;,sans-serif;">Time (days)</text><text x="0" y="0" transform="translate(1237.90 1123.30) rotate(-90)" text-anchor="middle" font-size="20.5" font-weight="700" fill="#000" style="font-family:&quot;Liberation Sans&quot;,sans-serif;" textLength="206.5" lengthAdjust="spacingAndGlyphs">Gas Rate (Mscf/day)</text><rect x="1454.20" y="848.00" width="304.30" height="47.50" fill="#fff" stroke="#000" stroke-width="1.5"/><circle cx="1481.50" cy="872.20" r="4.1" fill="none" stroke="#ff0000" stroke-width="2.3"/><text x="1509.20" y="880.00" font-size="21.5" fill="#1a1a1a" style="font-family:&quot;Liberation Sans&quot;,sans-serif;" textLength="86.9" lengthAdjust="spacingAndGlyphs">Historical</text><rect x="1609.50" y="870.90" width="39.5" height="2.6" fill="#000"/><text x="1656.70" y="880.00" font-size="21.5" fill="#1a1a1a" style="font-family:&quot;Liberation Sans&quot;,sans-serif;" textLength="93.8" lengthAdjust="spacingAndGlyphs">Simulated</text></svg>
<svg class="a" style="left:0;top:0;" width="2826" height="1546" viewBox="0 0 2826 1546"><rect x="2080.40" y="1293.12" width="623.40" height="1.5" fill="#e4e4e4"/><rect x="2080.40" y="1262.04" width="623.40" height="1.5" fill="#e4e4e4"/><rect x="2080.40" y="1239.99" width="623.40" height="1.5" fill="#e4e4e4"/><rect x="2080.40" y="1222.88" width="623.40" height="1.5" fill="#e4e4e4"/><rect x="2080.40" y="1208.91" width="623.40" height="1.5" fill="#e4e4e4"/><rect x="2080.40" y="1197.09" width="623.40" height="1.5" fill="#e4e4e4"/><rect x="2080.40" y="1186.85" width="623.40" height="1.5" fill="#e4e4e4"/><rect x="2080.40" y="1177.83" width="623.40" height="1.5" fill="#e4e4e4"/><rect x="2080.40" y="1169.75" width="623.40" height="1.5" fill="#e4e4e4"/><rect x="2080.40" y="1116.62" width="623.40" height="1.5" fill="#e4e4e4"/><rect x="2080.40" y="1085.54" width="623.40" height="1.5" fill="#e4e4e4"/><rect x="2080.40" y="1063.49" width="623.40" height="1.5" fill="#e4e4e4"/><rect x="2080.40" y="1046.38" width="623.40" height="1.5" fill="#e4e4e4"/><rect x="2080.40" y="1032.41" width="623.40" height="1.5" fill="#e4e4e4"/><rect x="2080.40" y="1020.59" width="623.40" height="1.5" fill="#e4e4e4"/><rect x="2080.40" y="1010.35" width="623.40" height="1.5" fill="#e4e4e4"/><rect x="2080.40" y="1001.33" width="623.40" height="1.5" fill="#e4e4e4"/><rect x="2080.40" y="993.25" width="623.40" height="1.5" fill="#e4e4e4"/><rect x="2080.40" y="940.12" width="623.40" height="1.5" fill="#e4e4e4"/><rect x="2080.40" y="909.04" width="623.40" height="1.5" fill="#e4e4e4"/><rect x="2204.27" y="900.60" width="1.5" height="445.60" fill="#e4e4e4"/><rect x="2328.99" y="900.60" width="1.5" height="445.60" fill="#e4e4e4"/><rect x="2453.71" y="900.60" width="1.5" height="445.60" fill="#e4e4e4"/><rect x="2578.43" y="900.60" width="1.5" height="445.60" fill="#e4e4e4"/><defs><clipPath id="cwat"><rect x="2079.40" y="899.60" width="625.40" height="447.60"/></clipPath></defs><g clip-path="url(#cwat)"><path d="M2083.50 975.00 C2084.07 967.70 2084.63 954.32 2085.20 953.10 C2087.07 949.08 2088.93 947.60 2090.80 947.60 C2095.40 947.60 2100.00 955.59 2104.60 961.40 C2109.20 967.21 2113.80 976.95 2118.40 985.00 C2123.03 993.11 2127.67 1005.26 2132.30 1009.90 C2136.90 1014.51 2141.50 1017.83 2146.10 1019.50 C2153.03 1022.02 2159.97 1023.40 2166.90 1024.40 C2176.10 1025.73 2185.30 1026.02 2194.50 1027.20 C2198.67 1027.73 2202.83 1029.20 2207.00 1029.20 C2210.23 1029.20 2213.47 1017.48 2216.70 1012.60 C2220.83 1006.36 2224.97 998.66 2229.10 996.00 C2236.03 991.53 2242.97 988.50 2249.90 987.70 C2256.83 986.90 2263.77 986.30 2270.70 986.30 C2279.90 986.30 2289.10 987.25 2298.30 988.40 C2305.23 989.26 2312.17 992.20 2319.10 994.60 C2332.93 999.39 2346.77 1006.56 2360.60 1012.60 C2370.40 1016.88 2380.20 1021.07 2390.00 1025.50 C2403.20 1031.46 2416.40 1040.39 2429.60 1044.00 C2438.40 1046.41 2447.20 1047.93 2456.00 1049.30 C2478.00 1052.72 2500.00 1054.13 2522.00 1057.20 C2541.80 1059.97 2561.60 1063.90 2581.40 1067.10 C2622.60 1073.75 2663.80 1079.90 2705.00 1086.30" fill="none" stroke="#0000ff" stroke-width="10.5" stroke-linecap="round" stroke-linejoin="round"/><circle cx="2082.00" cy="1074.20" r="3.9" fill="none" stroke="#0000ff" stroke-width="2.2"/><circle cx="2082.00" cy="1020.20" r="3.9" fill="none" stroke="#0000ff" stroke-width="2.2"/><circle cx="2083.00" cy="997.40" r="3.9" fill="none" stroke="#0000ff" stroke-width="2.2"/><circle cx="2083.50" cy="985.60" r="3.9" fill="none" stroke="#0000ff" stroke-width="2.2"/><circle cx="2084.00" cy="977.00" r="3.9" fill="none" stroke="#0000ff" stroke-width="2.2"/><circle cx="2084.50" cy="970.00" r="3.9" fill="none" stroke="#0000ff" stroke-width="2.2"/><circle cx="2085.00" cy="964.00" r="3.9" fill="none" stroke="#0000ff" stroke-width="2.2"/><circle cx="2085.50" cy="959.00" r="3.9" fill="none" stroke="#0000ff" stroke-width="2.2"/><path d="M2081.00 1008.50 C2081.70 979.90 2082.40 930.67 2083.10 922.70 C2084.27 909.42 2085.43 901.20 2086.60 901.20 C2089.37 901.20 2092.13 926.26 2094.90 936.50 C2099.50 953.53 2104.10 971.32 2108.70 980.80 C2114.27 992.27 2119.83 1000.84 2125.40 1005.70 C2132.30 1011.72 2139.20 1016.56 2146.10 1018.20 C2157.63 1020.95 2169.17 1021.66 2180.70 1023.00 C2189.93 1024.07 2199.17 1025.08 2208.40 1025.80 C2231.47 1027.59 2254.53 1028.59 2277.60 1029.90 C2321.23 1032.38 2364.87 1037.00 2408.50 1037.00 C2415.53 1037.00 2422.57 1023.65 2429.60 1022.20 C2432.03 1021.70 2434.47 1021.20 2436.90 1021.20 C2443.27 1021.20 2449.63 1022.18 2456.00 1022.90 C2478.00 1025.40 2500.00 1031.63 2522.00 1035.40 C2541.80 1038.79 2561.60 1042.14 2581.40 1044.70 C2605.60 1047.83 2629.80 1050.41 2654.00 1052.60 C2670.93 1054.13 2687.87 1055.27 2704.80 1056.60" fill="none" stroke="#000" stroke-width="2.6" stroke-linejoin="round"/></g><path d="M2079.40 899.60 H2704.80 M2079.40 899.60 V1347.20" stroke="#000" stroke-width="1.4" fill="none"/><path d="M2704.80 898.90 V1348.20 M2078.70 1347.20 H2705.80" stroke="#000" stroke-width="2.4" fill="none"/><rect x="2074.10" y="1345.75" width="5.3" height="2.5" fill="#000"/><text x="2069.40" y="1356.20" text-anchor="end" font-size="26.5" fill="#1a1a1a" style="font-family:&quot;Liberation Sans&quot;,sans-serif;">1</text><rect x="2074.10" y="1292.62" width="5.3" height="2.5" fill="#000"/><text x="2068.90" y="1299.77" text-anchor="end" font-size="16.5" fill="#1a1a1a" style="font-family:&quot;Liberation Sans&quot;,sans-serif;">2</text><rect x="2074.10" y="1261.54" width="5.3" height="2.5" fill="#000"/><text x="2068.90" y="1268.69" text-anchor="end" font-size="16.5" fill="#1a1a1a" style="font-family:&quot;Liberation Sans&quot;,sans-serif;">3</text><rect x="2074.10" y="1239.49" width="5.3" height="2.5" fill="#000"/><text x="2068.90" y="1246.64" text-anchor="end" font-size="16.5" fill="#1a1a1a" style="font-family:&quot;Liberation Sans&quot;,sans-serif;">4</text><rect x="2074.10" y="1222.38" width="5.3" height="2.5" fill="#000"/><text x="2068.90" y="1229.53" text-anchor="end" font-size="16.5" fill="#1a1a1a" style="font-family:&quot;Liberation Sans&quot;,sans-serif;">5</text><rect x="2074.10" y="1208.41" width="5.3" height="2.5" fill="#000"/><text x="2068.90" y="1215.56" text-anchor="end" font-size="16.5" fill="#1a1a1a" style="font-family:&quot;Liberation Sans&quot;,sans-serif;">6</text><rect x="2074.10" y="1196.59" width="5.3" height="2.5" fill="#000"/><text x="2068.90" y="1203.74" text-anchor="end" font-size="16.5" fill="#1a1a1a" style="font-family:&quot;Liberation Sans&quot;,sans-serif;">7</text><rect x="2074.10" y="1186.35" width="5.3" height="2.5" fill="#000"/><text x="2068.90" y="1193.50" text-anchor="end" font-size="16.5" fill="#1a1a1a" style="font-family:&quot;Liberation Sans&quot;,sans-serif;">8</text><rect x="2074.10" y="1177.33" width="5.3" height="2.5" fill="#000"/><text x="2068.90" y="1184.48" text-anchor="end" font-size="16.5" fill="#1a1a1a" style="font-family:&quot;Liberation Sans&quot;,sans-serif;">9</text><rect x="2074.10" y="1169.25" width="5.3" height="2.5" fill="#000"/><text x="2060.80" y="1179.70" text-anchor="end" font-size="26.5" fill="#1a1a1a" style="font-family:&quot;Liberation Sans&quot;,sans-serif;">10</text><rect x="2074.10" y="1116.12" width="5.3" height="2.5" fill="#000"/><text x="2068.90" y="1123.27" text-anchor="end" font-size="16.5" fill="#1a1a1a" style="font-family:&quot;Liberation Sans&quot;,sans-serif;">2</text><rect x="2074.10" y="1085.04" width="5.3" height="2.5" fill="#000"/><text x="2068.90" y="1092.19" text-anchor="end" font-size="16.5" fill="#1a1a1a" style="font-family:&quot;Liberation Sans&quot;,sans-serif;">3</text><rect x="2074.10" y="1062.99" width="5.3" height="2.5" fill="#000"/><text x="2068.90" y="1070.14" text-anchor="end" font-size="16.5" fill="#1a1a1a" style="font-family:&quot;Liberation Sans&quot;,sans-serif;">4</text><rect x="2074.10" y="1045.88" width="5.3" height="2.5" fill="#000"/><text x="2068.90" y="1053.03" text-anchor="end" font-size="16.5" fill="#1a1a1a" style="font-family:&quot;Liberation Sans&quot;,sans-serif;">5</text><rect x="2074.10" y="1031.91" width="5.3" height="2.5" fill="#000"/><text x="2068.90" y="1039.06" text-anchor="end" font-size="16.5" fill="#1a1a1a" style="font-family:&quot;Liberation Sans&quot;,sans-serif;">6</text><rect x="2074.10" y="1020.09" width="5.3" height="2.5" fill="#000"/><text x="2068.90" y="1027.24" text-anchor="end" font-size="16.5" fill="#1a1a1a" style="font-family:&quot;Liberation Sans&quot;,sans-serif;">7</text><rect x="2074.10" y="1009.85" width="5.3" height="2.5" fill="#000"/><text x="2068.90" y="1017.00" text-anchor="end" font-size="16.5" fill="#1a1a1a" style="font-family:&quot;Liberation Sans&quot;,sans-serif;">8</text><rect x="2074.10" y="1000.83" width="5.3" height="2.5" fill="#000"/><text x="2068.90" y="1007.98" text-anchor="end" font-size="16.5" fill="#1a1a1a" style="font-family:&quot;Liberation Sans&quot;,sans-serif;">9</text><rect x="2074.10" y="992.75" width="5.3" height="2.5" fill="#000"/><text x="2050.40" y="1003.20" text-anchor="end" font-size="26.5" fill="#1a1a1a" style="font-family:&quot;Liberation Sans&quot;,sans-serif;">10</text><text x="2061.90" y="991.80" text-anchor="end" font-size="18.5" fill="#1a1a1a" style="font-family:&quot;Liberation Sans&quot;,sans-serif;">2</text><rect x="2074.10" y="939.62" width="5.3" height="2.5" fill="#000"/><text x="2068.90" y="946.77" text-anchor="end" font-size="16.5" fill="#1a1a1a" style="font-family:&quot;Liberation Sans&quot;,sans-serif;">2</text><rect x="2074.10" y="908.54" width="5.3" height="2.5" fill="#000"/><text x="2068.90" y="915.69" text-anchor="end" font-size="16.5" fill="#1a1a1a" style="font-family:&quot;Liberation Sans&quot;,sans-serif;">3</text><rect x="2079.00" y="1347.20" width="2.6" height="6" fill="#000"/><text x="2080.30" y="1378.2" text-anchor="middle" font-size="20" fill="#1a1a1a" style="font-family:&quot;Liberation Sans&quot;,sans-serif;">0</text><rect x="2203.72" y="1347.20" width="2.6" height="6" fill="#000"/><text x="2205.02" y="1378.2" text-anchor="middle" font-size="20" fill="#1a1a1a" style="font-family:&quot;Liberation Sans&quot;,sans-serif;">200</text><rect x="2328.44" y="1347.20" width="2.6" height="6" fill="#000"/><text x="2329.74" y="1378.2" text-anchor="middle" font-size="20" fill="#1a1a1a" style="font-family:&quot;Liberation Sans&quot;,sans-serif;">400</text><rect x="2453.16" y="1347.20" width="2.6" height="6" fill="#000"/><text x="2454.46" y="1378.2" text-anchor="middle" font-size="20" fill="#1a1a1a" style="font-family:&quot;Liberation Sans&quot;,sans-serif;">600</text><rect x="2577.88" y="1347.20" width="2.6" height="6" fill="#000"/><text x="2579.18" y="1378.2" text-anchor="middle" font-size="20" fill="#1a1a1a" style="font-family:&quot;Liberation Sans&quot;,sans-serif;">800</text><rect x="2702.60" y="1347.20" width="2.6" height="6" fill="#000"/><text x="2703.90" y="1378.2" text-anchor="middle" font-size="20" fill="#1a1a1a" style="font-family:&quot;Liberation Sans&quot;,sans-serif;">1000</text><text x="2392.10" y="1402.8" text-anchor="middle" font-size="20.5" font-weight="700" fill="#000" style="font-family:&quot;Liberation Sans&quot;,sans-serif;">Time (days)</text><text x="0" y="0" transform="translate(2024.40 1123.30) rotate(-90)" text-anchor="middle" font-size="20.5" font-weight="700" fill="#000" style="font-family:&quot;Liberation Sans&quot;,sans-serif;" textLength="217.2" lengthAdjust="spacingAndGlyphs">Water Rate (STB/day)</text><rect x="2240.70" y="848.40" width="303.50" height="46.40" fill="#fff" stroke="#000" stroke-width="1.5"/><circle cx="2268.00" cy="872.60" r="4.1" fill="none" stroke="#0000ff" stroke-width="2.3"/><text x="2295.70" y="880.40" font-size="21.5" fill="#1a1a1a" style="font-family:&quot;Liberation Sans&quot;,sans-serif;" textLength="86.9" lengthAdjust="spacingAndGlyphs">Historical</text><rect x="2396.00" y="871.30" width="39.5" height="2.6" fill="#000"/><text x="2443.20" y="880.40" font-size="21.5" fill="#1a1a1a" style="font-family:&quot;Liberation Sans&quot;,sans-serif;" textLength="93.8" lengthAdjust="spacingAndGlyphs">Simulated</text></svg>
</div></div>
<div class="a" style="left:0.00px;top:1497.60px;width:2826.00px;height:48.40px;background:#00305e;z-index:6;"></div>
<div class="t" style="left:9.80px;top:1510.85px;font-size:22.38px;line-height:22.38px;color:#ffffff;transform:scaleX(0.9434);transform-origin:0 0;z-index:7;">© 2023 - Whitson AS. All rights reserved</div></body></html>
